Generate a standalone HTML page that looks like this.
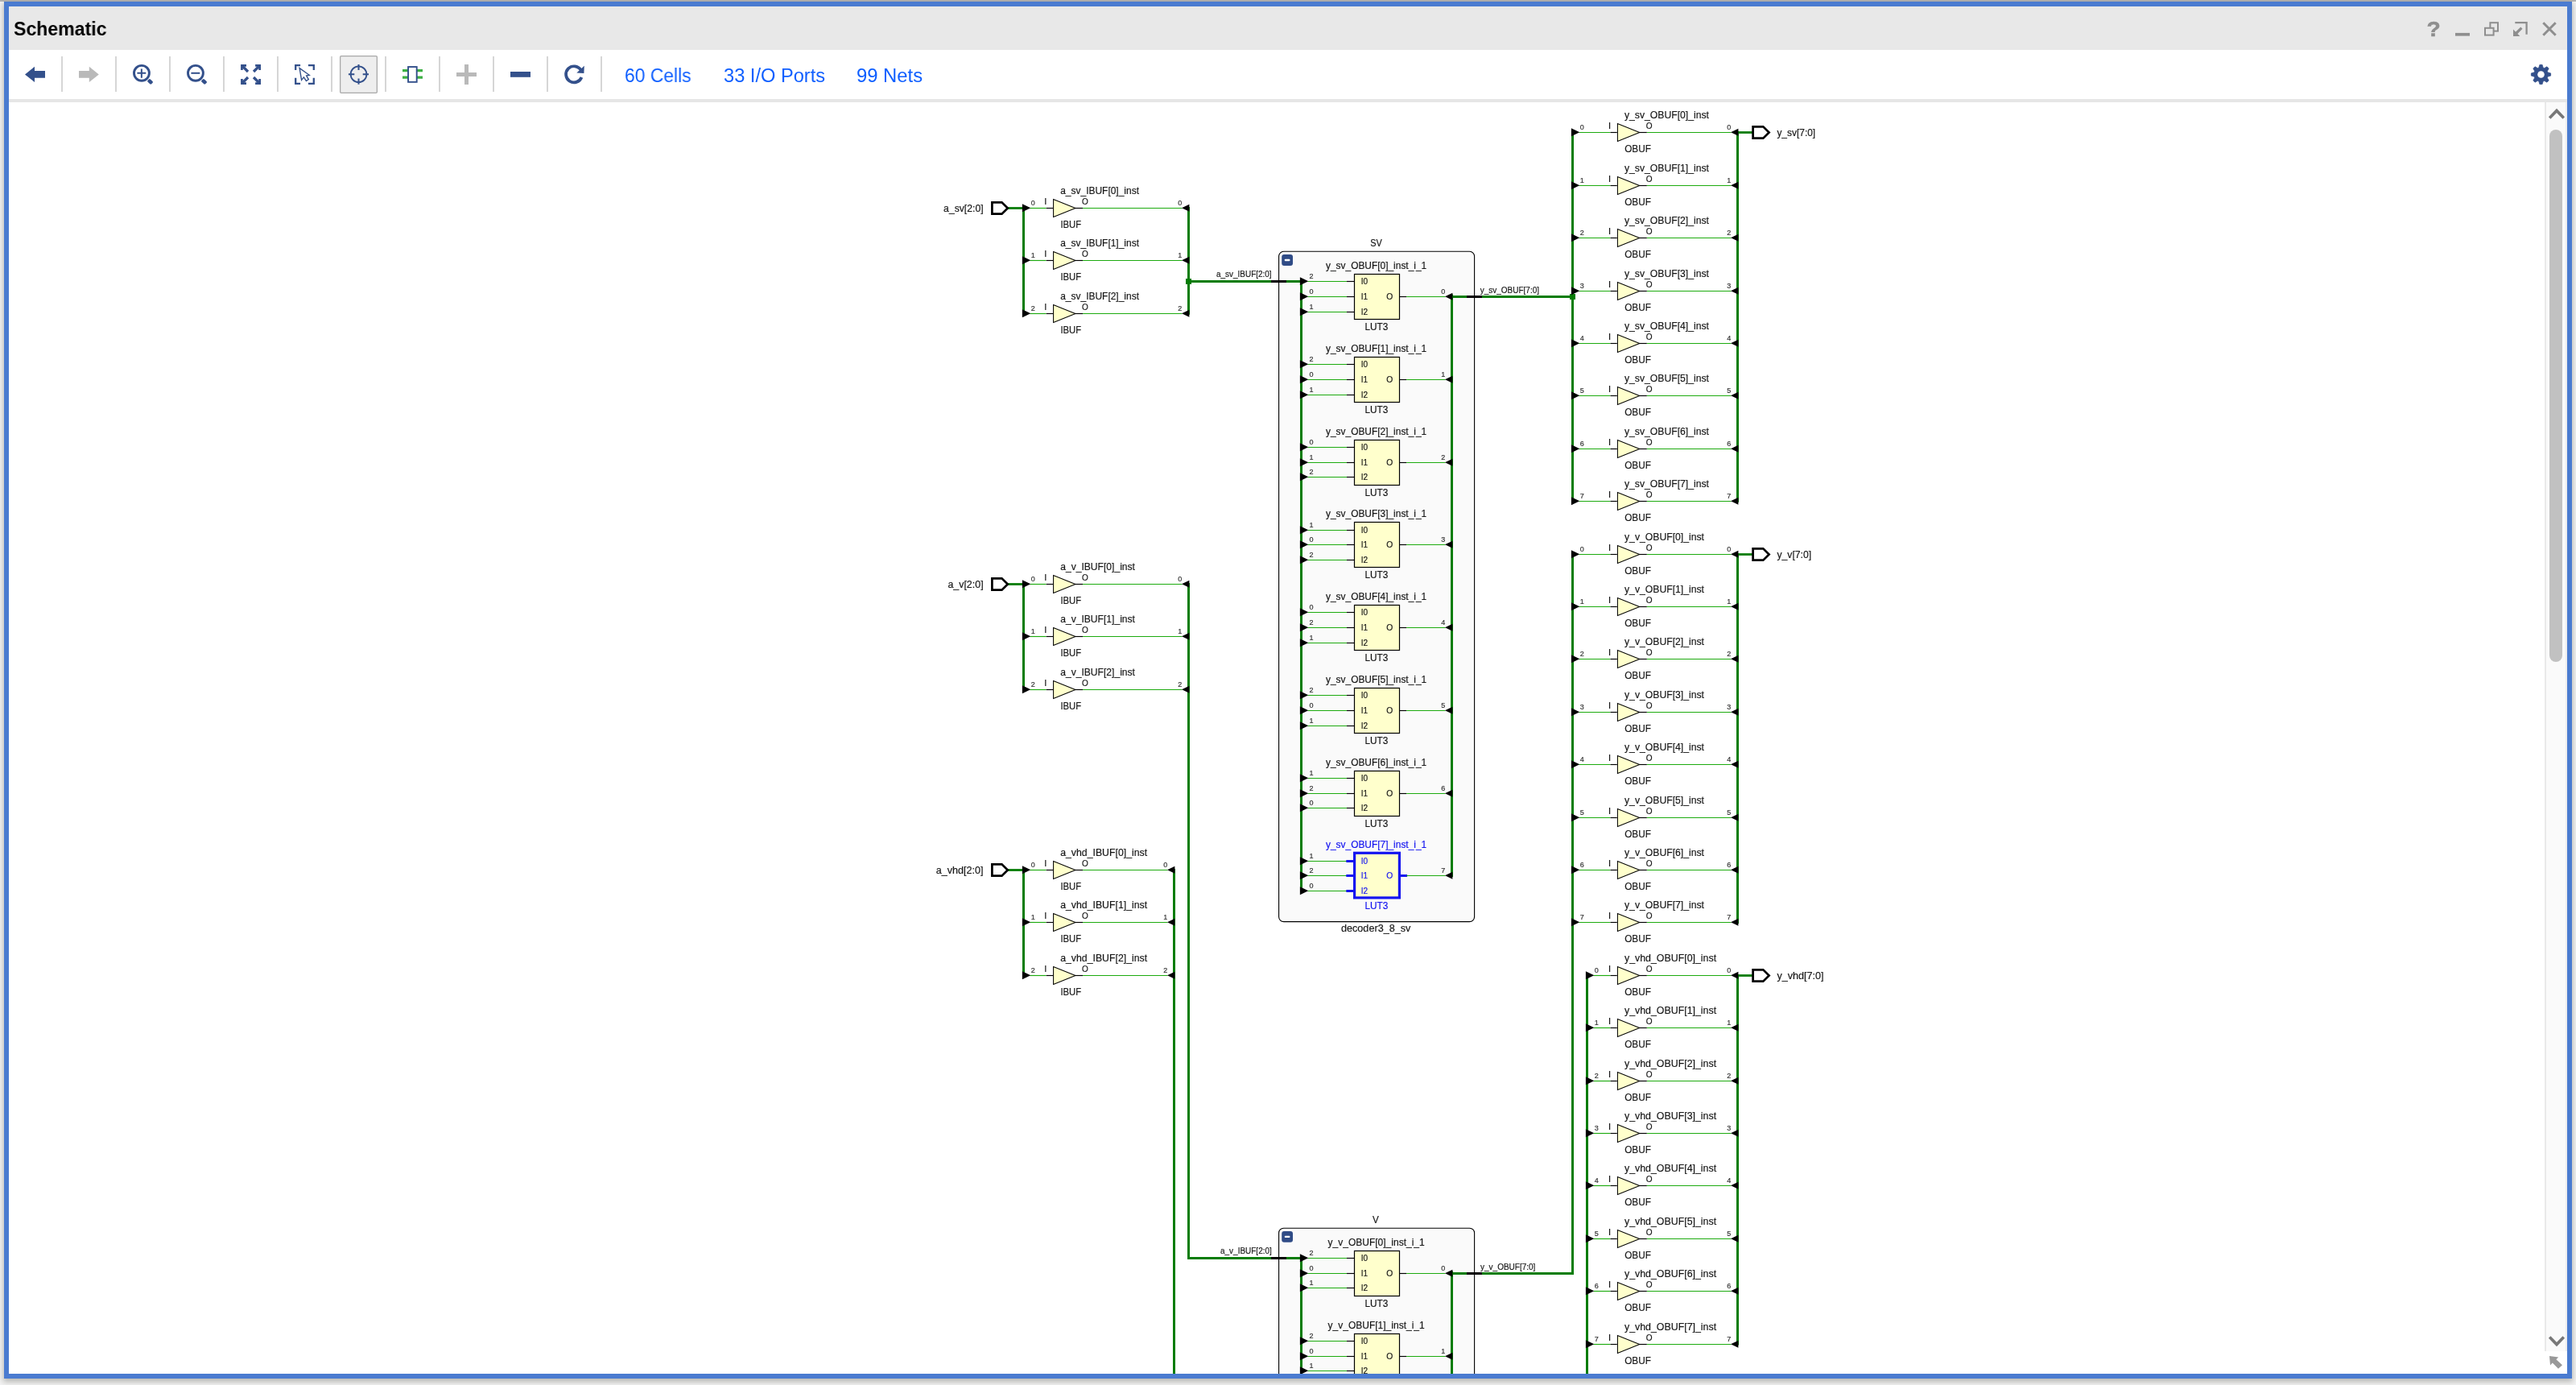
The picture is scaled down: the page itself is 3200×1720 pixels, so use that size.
<!DOCTYPE html>
<html>
<head>
<meta charset="utf-8">
<title>Schematic</title>
<style>
html,body{margin:0;padding:0;}
body{width:3200px;height:1720px;overflow:hidden;position:relative;background:#f3f3f3;font-family:"Liberation Sans",sans-serif;}
#topstrip{position:absolute;left:0;top:0;width:3200px;height:2px;background:#b4b4b4;}
#win{position:absolute;left:5px;top:2px;width:3178px;height:1698px;border:6px solid #4a7bd0;background:#fff;box-shadow:0 3px 7px 1px rgba(60,60,50,0.33);}
#titlebar{position:absolute;left:11px;top:8px;width:3178px;height:54px;background:#e8e8e8;}
#title{position:absolute;left:17px;top:22.2px;font-weight:bold;font-size:24.2px;line-height:28px;color:#000;white-space:nowrap;transform-origin:0 0;transform:scaleX(0.955);will-change:transform;}
#toolbar{position:absolute;left:11px;top:62px;width:3178px;height:61px;background:#fff;}
#tbline{position:absolute;left:11px;top:123px;width:3178px;height:3.5px;background:#e6e6e6;}
.sep{position:absolute;top:70px;width:1.7px;height:44px;background:#d6d6d6;}
.lnk{position:absolute;top:78.6px;will-change:transform;font-size:23px;line-height:30px;color:#0f5fff;white-space:nowrap;transform-origin:0 0;}
#selbtn{position:absolute;left:422.2px;top:69.1px;width:46.6px;height:46.7px;box-sizing:border-box;border-radius:2px;background:#eeeeee;box-shadow:inset 0 0 0 1.3px #a9a9a9;}
#sbtrack{position:absolute;left:3161px;top:126.5px;width:26px;height:1551.5px;background:#fafafa;border-left:2px solid #e9e9e9;}
#sbthumb{position:absolute;left:3167px;top:161px;width:16px;height:661px;border-radius:8px;background:#c1c1c1;}
#sbr{position:absolute;left:3187px;top:126.5px;width:2px;height:1551.5px;background:#eeeeee;}
</style>
</head>
<body>
<div id="topstrip"></div>
<div id="win"></div>
<div id="titlebar"></div>
<div id="toolbar"></div>
<div id="tbline"></div>
<div id="title">Schematic</div>
<div class="sep" style="left:76.2px"></div>
<div class="sep" style="left:143.2px"></div>
<div class="sep" style="left:210.2px"></div>
<div class="sep" style="left:277.2px"></div>
<div class="sep" style="left:344.2px"></div>
<div class="sep" style="left:411.2px"></div>
<div class="sep" style="left:478.2px"></div>
<div class="sep" style="left:545.2px"></div>
<div class="sep" style="left:612.2px"></div>
<div class="sep" style="left:679.2px"></div>
<div class="sep" style="left:746.2px"></div>
<div id="selbtn"></div>
<div class="lnk" id="l1" style="left:775.6px;transform:scaleX(0.994)">60 Cells</div>
<div class="lnk" id="l2" style="left:898.6px;transform:scaleX(1.027)">33 I/O Ports</div>
<div class="lnk" id="l3" style="left:1064.4px;transform:scaleX(1.036)">99 Nets</div>
<div id="sbtrack"></div><div id="sbr"></div>
<div id="sbthumb"></div>
<svg id="sch" width="3200" height="1720" viewBox="0 0 3200 1720" font-family="Liberation Sans, sans-serif" style="position:absolute;left:0;top:0;will-change:transform">
<defs><clipPath id="cv"><rect x="11" y="127" width="3150" height="1579"/></clipPath></defs>
<g clip-path="url(#cv)">
<rect x="1588.6" y="312.3" width="243" height="832.3" rx="6" ry="6" fill="#fafafa" stroke="#000" stroke-width="1.1"/>
<rect x="1588.6" y="1525.2" width="243" height="274.8" rx="6" ry="6" fill="#fafafa" stroke="#000" stroke-width="1.1"/>
<path d="M1279.5 258.5L1299.7 258.5" stroke="#1dab0f" stroke-width="1.15" fill="none"/>
<path d="M1345 258.5L1468.5 258.5" stroke="#1dab0f" stroke-width="1.15" fill="none"/>
<path d="M1279.5 323.5L1299.7 323.5" stroke="#1dab0f" stroke-width="1.15" fill="none"/>
<path d="M1345 323.5L1468.5 323.5" stroke="#1dab0f" stroke-width="1.15" fill="none"/>
<path d="M1279.5 389.5L1299.7 389.5" stroke="#1dab0f" stroke-width="1.15" fill="none"/>
<path d="M1345 389.5L1468.5 389.5" stroke="#1dab0f" stroke-width="1.15" fill="none"/>
<path d="M1271.5 258.5L1271.5 389.2" stroke="#057c05" stroke-width="3" stroke-linecap="square" fill="none"/>
<path d="M1251.7 258.5L1271.5 258.5" stroke="#057c05" stroke-width="2.8" fill="none"/>
<path d="M1279.5 725.5L1299.7 725.5" stroke="#1dab0f" stroke-width="1.15" fill="none"/>
<path d="M1345 725.5L1468.5 725.5" stroke="#1dab0f" stroke-width="1.15" fill="none"/>
<path d="M1279.5 790.5L1299.7 790.5" stroke="#1dab0f" stroke-width="1.15" fill="none"/>
<path d="M1345 790.5L1468.5 790.5" stroke="#1dab0f" stroke-width="1.15" fill="none"/>
<path d="M1279.5 856.5L1299.7 856.5" stroke="#1dab0f" stroke-width="1.15" fill="none"/>
<path d="M1345 856.5L1468.5 856.5" stroke="#1dab0f" stroke-width="1.15" fill="none"/>
<path d="M1271.5 725.4L1271.5 856.3" stroke="#057c05" stroke-width="3" stroke-linecap="square" fill="none"/>
<path d="M1251.7 725.5L1271.5 725.5" stroke="#057c05" stroke-width="2.8" fill="none"/>
<path d="M1279.5 1080.5L1299.7 1080.5" stroke="#1dab0f" stroke-width="1.15" fill="none"/>
<path d="M1345 1080.5L1450.5 1080.5" stroke="#1dab0f" stroke-width="1.15" fill="none"/>
<path d="M1279.5 1145.5L1299.7 1145.5" stroke="#1dab0f" stroke-width="1.15" fill="none"/>
<path d="M1345 1145.5L1450.5 1145.5" stroke="#1dab0f" stroke-width="1.15" fill="none"/>
<path d="M1279.5 1211.5L1299.7 1211.5" stroke="#1dab0f" stroke-width="1.15" fill="none"/>
<path d="M1345 1211.5L1450.5 1211.5" stroke="#1dab0f" stroke-width="1.15" fill="none"/>
<path d="M1271.5 1080.5L1271.5 1211.2" stroke="#057c05" stroke-width="3" stroke-linecap="square" fill="none"/>
<path d="M1251.7 1080.5L1271.5 1080.5" stroke="#057c05" stroke-width="2.8" fill="none"/>
<path d="M1476.5 258.5L1476.5 389.2" stroke="#057c05" stroke-width="3" stroke-linecap="square" fill="none"/>
<path d="M1476.5 725.4L1476.5 1562.5" stroke="#057c05" stroke-width="3" stroke-linecap="square" fill="none"/>
<path d="M1475 1562.5L1579 1562.5" stroke="#057c05" stroke-width="3" fill="none"/>
<path d="M1458.5 1080.5L1458.5 1720" stroke="#057c05" stroke-width="3" stroke-linecap="square" fill="none"/>
<path d="M1476.5 349.5L1579 349.5" stroke="#057c05" stroke-width="3" fill="none"/>
<path d="M1579 349.5L1598 349.5" stroke="#000" stroke-width="3" fill="none"/>
<path d="M1598 349.5L1617 349.5" stroke="#057c05" stroke-width="3" fill="none"/>
<path d="M1579 1562.5L1598 1562.5" stroke="#000" stroke-width="3" fill="none"/>
<path d="M1598 1562.5L1617 1562.5" stroke="#057c05" stroke-width="3" fill="none"/>
<path d="M1624.5 349.5L1673 349.5" stroke="#1dab0f" stroke-width="1.15" fill="none"/>
<path d="M1624.5 368.5L1673 368.5" stroke="#1dab0f" stroke-width="1.15" fill="none"/>
<path d="M1624.5 387.5L1673 387.5" stroke="#1dab0f" stroke-width="1.15" fill="none"/>
<path d="M1747.1 368.5L1795.5 368.5" stroke="#1dab0f" stroke-width="1.15" fill="none"/>
<path d="M1624.5 452.5L1673 452.5" stroke="#1dab0f" stroke-width="1.15" fill="none"/>
<path d="M1624.5 471.5L1673 471.5" stroke="#1dab0f" stroke-width="1.15" fill="none"/>
<path d="M1624.5 490.5L1673 490.5" stroke="#1dab0f" stroke-width="1.15" fill="none"/>
<path d="M1747.1 471.5L1795.5 471.5" stroke="#1dab0f" stroke-width="1.15" fill="none"/>
<path d="M1624.5 555.5L1673 555.5" stroke="#1dab0f" stroke-width="1.15" fill="none"/>
<path d="M1624.5 574.5L1673 574.5" stroke="#1dab0f" stroke-width="1.15" fill="none"/>
<path d="M1624.5 592.5L1673 592.5" stroke="#1dab0f" stroke-width="1.15" fill="none"/>
<path d="M1747.1 574.5L1795.5 574.5" stroke="#1dab0f" stroke-width="1.15" fill="none"/>
<path d="M1624.5 658.5L1673 658.5" stroke="#1dab0f" stroke-width="1.15" fill="none"/>
<path d="M1624.5 676.5L1673 676.5" stroke="#1dab0f" stroke-width="1.15" fill="none"/>
<path d="M1624.5 695.5L1673 695.5" stroke="#1dab0f" stroke-width="1.15" fill="none"/>
<path d="M1747.1 676.5L1795.5 676.5" stroke="#1dab0f" stroke-width="1.15" fill="none"/>
<path d="M1624.5 760.5L1673 760.5" stroke="#1dab0f" stroke-width="1.15" fill="none"/>
<path d="M1624.5 779.5L1673 779.5" stroke="#1dab0f" stroke-width="1.15" fill="none"/>
<path d="M1624.5 798.5L1673 798.5" stroke="#1dab0f" stroke-width="1.15" fill="none"/>
<path d="M1747.1 779.5L1795.5 779.5" stroke="#1dab0f" stroke-width="1.15" fill="none"/>
<path d="M1624.5 863.5L1673 863.5" stroke="#1dab0f" stroke-width="1.15" fill="none"/>
<path d="M1624.5 882.5L1673 882.5" stroke="#1dab0f" stroke-width="1.15" fill="none"/>
<path d="M1624.5 901.5L1673 901.5" stroke="#1dab0f" stroke-width="1.15" fill="none"/>
<path d="M1747.1 882.5L1795.5 882.5" stroke="#1dab0f" stroke-width="1.15" fill="none"/>
<path d="M1624.5 966.5L1673 966.5" stroke="#1dab0f" stroke-width="1.15" fill="none"/>
<path d="M1624.5 985.5L1673 985.5" stroke="#1dab0f" stroke-width="1.15" fill="none"/>
<path d="M1624.5 1003.5L1673 1003.5" stroke="#1dab0f" stroke-width="1.15" fill="none"/>
<path d="M1747.1 985.5L1795.5 985.5" stroke="#1dab0f" stroke-width="1.15" fill="none"/>
<path d="M1624.5 1069.5L1673 1069.5" stroke="#1dab0f" stroke-width="1.15" fill="none"/>
<path d="M1672.3 1069.5L1682.5 1069.5" stroke="#1414f0" stroke-width="3" fill="none"/>
<path d="M1624.5 1087.5L1673 1087.5" stroke="#1dab0f" stroke-width="1.15" fill="none"/>
<path d="M1672.3 1087.5L1682.5 1087.5" stroke="#1414f0" stroke-width="3" fill="none"/>
<path d="M1624.5 1106.5L1673 1106.5" stroke="#1dab0f" stroke-width="1.15" fill="none"/>
<path d="M1672.3 1106.5L1682.5 1106.5" stroke="#1414f0" stroke-width="3" fill="none"/>
<path d="M1738.5 1087.5L1748.1 1087.5" stroke="#1414f0" stroke-width="3" fill="none"/>
<path d="M1747.1 1087.5L1795.5 1087.5" stroke="#1dab0f" stroke-width="1.15" fill="none"/>
<path d="M1616.5 349.5L1616.5 1106.5" stroke="#057c05" stroke-width="3" stroke-linecap="square" fill="none"/>
<path d="M1803.5 367.1L1803.5 1087.5" stroke="#057c05" stroke-width="3" stroke-linecap="square" fill="none"/>
<path d="M1803.5 368.5L1822 368.5" stroke="#057c05" stroke-width="3" fill="none"/>
<path d="M1822 368.5L1841 368.5" stroke="#000" stroke-width="3" fill="none"/>
<path d="M1841 368.5L1953.5 368.5" stroke="#057c05" stroke-width="3" fill="none"/>
<path d="M1624.5 1562.5L1673 1562.5" stroke="#1dab0f" stroke-width="1.15" fill="none"/>
<path d="M1624.5 1581.5L1673 1581.5" stroke="#1dab0f" stroke-width="1.15" fill="none"/>
<path d="M1624.5 1599.5L1673 1599.5" stroke="#1dab0f" stroke-width="1.15" fill="none"/>
<path d="M1747.1 1581.5L1795.5 1581.5" stroke="#1dab0f" stroke-width="1.15" fill="none"/>
<path d="M1624.5 1665.5L1673 1665.5" stroke="#1dab0f" stroke-width="1.15" fill="none"/>
<path d="M1624.5 1684.5L1673 1684.5" stroke="#1dab0f" stroke-width="1.15" fill="none"/>
<path d="M1624.5 1702.5L1673 1702.5" stroke="#1dab0f" stroke-width="1.15" fill="none"/>
<path d="M1747.1 1684.5L1795.5 1684.5" stroke="#1dab0f" stroke-width="1.15" fill="none"/>
<path d="M1616.5 1562.5L1616.5 1720" stroke="#057c05" stroke-width="3" stroke-linecap="square" fill="none"/>
<path d="M1803.5 1580.1L1803.5 1720" stroke="#057c05" stroke-width="3" stroke-linecap="square" fill="none"/>
<path d="M1803.5 1581.5L1822 1581.5" stroke="#057c05" stroke-width="3" fill="none"/>
<path d="M1822 1581.5L1841 1581.5" stroke="#000" stroke-width="3" fill="none"/>
<path d="M1841 1581.5L1955 1581.5" stroke="#057c05" stroke-width="3" fill="none"/>
<path d="M1961.5 164.5L2000.5 164.5" stroke="#1dab0f" stroke-width="1.15" fill="none"/>
<path d="M2045.8 164.5L2150.5 164.5" stroke="#1dab0f" stroke-width="1.15" fill="none"/>
<path d="M1961.5 230.5L2000.5 230.5" stroke="#1dab0f" stroke-width="1.15" fill="none"/>
<path d="M2045.8 230.5L2150.5 230.5" stroke="#1dab0f" stroke-width="1.15" fill="none"/>
<path d="M1961.5 295.5L2000.5 295.5" stroke="#1dab0f" stroke-width="1.15" fill="none"/>
<path d="M2045.8 295.5L2150.5 295.5" stroke="#1dab0f" stroke-width="1.15" fill="none"/>
<path d="M1961.5 361.5L2000.5 361.5" stroke="#1dab0f" stroke-width="1.15" fill="none"/>
<path d="M2045.8 361.5L2150.5 361.5" stroke="#1dab0f" stroke-width="1.15" fill="none"/>
<path d="M1961.5 426.5L2000.5 426.5" stroke="#1dab0f" stroke-width="1.15" fill="none"/>
<path d="M2045.8 426.5L2150.5 426.5" stroke="#1dab0f" stroke-width="1.15" fill="none"/>
<path d="M1961.5 491.5L2000.5 491.5" stroke="#1dab0f" stroke-width="1.15" fill="none"/>
<path d="M2045.8 491.5L2150.5 491.5" stroke="#1dab0f" stroke-width="1.15" fill="none"/>
<path d="M1961.5 557.5L2000.5 557.5" stroke="#1dab0f" stroke-width="1.15" fill="none"/>
<path d="M2045.8 557.5L2150.5 557.5" stroke="#1dab0f" stroke-width="1.15" fill="none"/>
<path d="M1961.5 622.5L2000.5 622.5" stroke="#1dab0f" stroke-width="1.15" fill="none"/>
<path d="M2045.8 622.5L2150.5 622.5" stroke="#1dab0f" stroke-width="1.15" fill="none"/>
<path d="M2158.5 164.5L2178 164.5" stroke="#057c05" stroke-width="2.8" fill="none"/>
<path d="M1953.5 164.3L1953.5 622.3" stroke="#057c05" stroke-width="3" stroke-linecap="square" fill="none"/>
<path d="M2158.5 164.3L2158.5 622.3" stroke="#057c05" stroke-width="3" stroke-linecap="square" fill="none"/>
<path d="M1961.5 688.5L2000.5 688.5" stroke="#1dab0f" stroke-width="1.15" fill="none"/>
<path d="M2045.8 688.5L2150.5 688.5" stroke="#1dab0f" stroke-width="1.15" fill="none"/>
<path d="M1961.5 753.5L2000.5 753.5" stroke="#1dab0f" stroke-width="1.15" fill="none"/>
<path d="M2045.8 753.5L2150.5 753.5" stroke="#1dab0f" stroke-width="1.15" fill="none"/>
<path d="M1961.5 818.5L2000.5 818.5" stroke="#1dab0f" stroke-width="1.15" fill="none"/>
<path d="M2045.8 818.5L2150.5 818.5" stroke="#1dab0f" stroke-width="1.15" fill="none"/>
<path d="M1961.5 884.5L2000.5 884.5" stroke="#1dab0f" stroke-width="1.15" fill="none"/>
<path d="M2045.8 884.5L2150.5 884.5" stroke="#1dab0f" stroke-width="1.15" fill="none"/>
<path d="M1961.5 949.5L2000.5 949.5" stroke="#1dab0f" stroke-width="1.15" fill="none"/>
<path d="M2045.8 949.5L2150.5 949.5" stroke="#1dab0f" stroke-width="1.15" fill="none"/>
<path d="M1961.5 1015.5L2000.5 1015.5" stroke="#1dab0f" stroke-width="1.15" fill="none"/>
<path d="M2045.8 1015.5L2150.5 1015.5" stroke="#1dab0f" stroke-width="1.15" fill="none"/>
<path d="M1961.5 1080.5L2000.5 1080.5" stroke="#1dab0f" stroke-width="1.15" fill="none"/>
<path d="M2045.8 1080.5L2150.5 1080.5" stroke="#1dab0f" stroke-width="1.15" fill="none"/>
<path d="M1961.5 1145.5L2000.5 1145.5" stroke="#1dab0f" stroke-width="1.15" fill="none"/>
<path d="M2045.8 1145.5L2150.5 1145.5" stroke="#1dab0f" stroke-width="1.15" fill="none"/>
<path d="M2158.5 688.5L2178 688.5" stroke="#057c05" stroke-width="2.8" fill="none"/>
<path d="M1953.5 688.4L1953.5 1581.5" stroke="#057c05" stroke-width="3" stroke-linecap="square" fill="none"/>
<path d="M2158.5 688.4L2158.5 1145.4" stroke="#057c05" stroke-width="3" stroke-linecap="square" fill="none"/>
<path d="M1979.5 1211.5L2000.5 1211.5" stroke="#1dab0f" stroke-width="1.15" fill="none"/>
<path d="M2045.8 1211.5L2150.5 1211.5" stroke="#1dab0f" stroke-width="1.15" fill="none"/>
<path d="M1979.5 1276.5L2000.5 1276.5" stroke="#1dab0f" stroke-width="1.15" fill="none"/>
<path d="M2045.8 1276.5L2150.5 1276.5" stroke="#1dab0f" stroke-width="1.15" fill="none"/>
<path d="M1979.5 1342.5L2000.5 1342.5" stroke="#1dab0f" stroke-width="1.15" fill="none"/>
<path d="M2045.8 1342.5L2150.5 1342.5" stroke="#1dab0f" stroke-width="1.15" fill="none"/>
<path d="M1979.5 1407.5L2000.5 1407.5" stroke="#1dab0f" stroke-width="1.15" fill="none"/>
<path d="M2045.8 1407.5L2150.5 1407.5" stroke="#1dab0f" stroke-width="1.15" fill="none"/>
<path d="M1979.5 1472.5L2000.5 1472.5" stroke="#1dab0f" stroke-width="1.15" fill="none"/>
<path d="M2045.8 1472.5L2150.5 1472.5" stroke="#1dab0f" stroke-width="1.15" fill="none"/>
<path d="M1979.5 1538.5L2000.5 1538.5" stroke="#1dab0f" stroke-width="1.15" fill="none"/>
<path d="M2045.8 1538.5L2150.5 1538.5" stroke="#1dab0f" stroke-width="1.15" fill="none"/>
<path d="M1979.5 1603.5L2000.5 1603.5" stroke="#1dab0f" stroke-width="1.15" fill="none"/>
<path d="M2045.8 1603.5L2150.5 1603.5" stroke="#1dab0f" stroke-width="1.15" fill="none"/>
<path d="M1979.5 1669.5L2000.5 1669.5" stroke="#1dab0f" stroke-width="1.15" fill="none"/>
<path d="M2045.8 1669.5L2150.5 1669.5" stroke="#1dab0f" stroke-width="1.15" fill="none"/>
<path d="M2158.5 1211.5L2178 1211.5" stroke="#057c05" stroke-width="2.8" fill="none"/>
<path d="M1971.5 1211.4L1971.5 1720" stroke="#057c05" stroke-width="3" stroke-linecap="square" fill="none"/>
<path d="M2158.5 1211.4L2158.5 1669.1" stroke="#057c05" stroke-width="3" stroke-linecap="square" fill="none"/>
<polygon points="1269.9,253.2 1269.9,263.2 1280.3,258.2" fill="#000"/>
<path d="M1299.7 258.5L1308 258.5" stroke="#000" stroke-width="1.15" fill="none"/>
<path d="M1335 258.5L1345 258.5" stroke="#000" stroke-width="1.15" fill="none"/>
<polygon points="1477.4,253.8 1477.4,262.8 1468,258.3" fill="#000"/>
<polygon points="1308.6,247.6 1308.6,269.4 1335.9,258.5" fill="#ffffcc" stroke="#000" stroke-width="1.05" stroke-linejoin="miter"/>
<polygon points="1269.9,318.2 1269.9,328.2 1280.3,323.2" fill="#000"/>
<path d="M1299.7 323.5L1308 323.5" stroke="#000" stroke-width="1.15" fill="none"/>
<path d="M1335 323.5L1345 323.5" stroke="#000" stroke-width="1.15" fill="none"/>
<polygon points="1477.4,318.8 1477.4,327.8 1468,323.3" fill="#000"/>
<polygon points="1308.6,312.6 1308.6,334.4 1335.9,323.5" fill="#ffffcc" stroke="#000" stroke-width="1.05" stroke-linejoin="miter"/>
<polygon points="1269.9,384.2 1269.9,394.2 1280.3,389.2" fill="#000"/>
<path d="M1299.7 389.5L1308 389.5" stroke="#000" stroke-width="1.15" fill="none"/>
<path d="M1335 389.5L1345 389.5" stroke="#000" stroke-width="1.15" fill="none"/>
<polygon points="1477.4,384.8 1477.4,393.8 1468,389.3" fill="#000"/>
<polygon points="1308.6,378.6 1308.6,400.4 1335.9,389.5" fill="#ffffcc" stroke="#000" stroke-width="1.05" stroke-linejoin="miter"/>
<polygon points="1232.4,251.3 1244.5,251.3 1251.8,258.5 1244.5,265.7 1232.4,265.7" fill="#fff" stroke="#000" stroke-width="2.7" stroke-linejoin="miter"/>
<polygon points="1269.9,720.2 1269.9,730.2 1280.3,725.2" fill="#000"/>
<path d="M1299.7 725.5L1308 725.5" stroke="#000" stroke-width="1.15" fill="none"/>
<path d="M1335 725.5L1345 725.5" stroke="#000" stroke-width="1.15" fill="none"/>
<polygon points="1477.4,720.8 1477.4,729.8 1468,725.3" fill="#000"/>
<polygon points="1308.6,714.6 1308.6,736.4 1335.9,725.5" fill="#ffffcc" stroke="#000" stroke-width="1.05" stroke-linejoin="miter"/>
<polygon points="1269.9,785.2 1269.9,795.2 1280.3,790.2" fill="#000"/>
<path d="M1299.7 790.5L1308 790.5" stroke="#000" stroke-width="1.15" fill="none"/>
<path d="M1335 790.5L1345 790.5" stroke="#000" stroke-width="1.15" fill="none"/>
<polygon points="1477.4,785.8 1477.4,794.8 1468,790.3" fill="#000"/>
<polygon points="1308.6,779.6 1308.6,801.4 1335.9,790.5" fill="#ffffcc" stroke="#000" stroke-width="1.05" stroke-linejoin="miter"/>
<polygon points="1269.9,851.2 1269.9,861.2 1280.3,856.2" fill="#000"/>
<path d="M1299.7 856.5L1308 856.5" stroke="#000" stroke-width="1.15" fill="none"/>
<path d="M1335 856.5L1345 856.5" stroke="#000" stroke-width="1.15" fill="none"/>
<polygon points="1477.4,851.8 1477.4,860.8 1468,856.3" fill="#000"/>
<polygon points="1308.6,845.6 1308.6,867.4 1335.9,856.5" fill="#ffffcc" stroke="#000" stroke-width="1.05" stroke-linejoin="miter"/>
<polygon points="1232.4,718.3 1244.5,718.3 1251.8,725.5 1244.5,732.7 1232.4,732.7" fill="#fff" stroke="#000" stroke-width="2.7" stroke-linejoin="miter"/>
<polygon points="1269.9,1075.2 1269.9,1085.2 1280.3,1080.2" fill="#000"/>
<path d="M1299.7 1080.5L1308 1080.5" stroke="#000" stroke-width="1.15" fill="none"/>
<path d="M1335 1080.5L1345 1080.5" stroke="#000" stroke-width="1.15" fill="none"/>
<polygon points="1459.4,1075.8 1459.4,1084.8 1450,1080.3" fill="#000"/>
<polygon points="1308.6,1069.6 1308.6,1091.4 1335.9,1080.5" fill="#ffffcc" stroke="#000" stroke-width="1.05" stroke-linejoin="miter"/>
<polygon points="1269.9,1140.2 1269.9,1150.2 1280.3,1145.2" fill="#000"/>
<path d="M1299.7 1145.5L1308 1145.5" stroke="#000" stroke-width="1.15" fill="none"/>
<path d="M1335 1145.5L1345 1145.5" stroke="#000" stroke-width="1.15" fill="none"/>
<polygon points="1459.4,1140.8 1459.4,1149.8 1450,1145.3" fill="#000"/>
<polygon points="1308.6,1134.6 1308.6,1156.4 1335.9,1145.5" fill="#ffffcc" stroke="#000" stroke-width="1.05" stroke-linejoin="miter"/>
<polygon points="1269.9,1206.2 1269.9,1216.2 1280.3,1211.2" fill="#000"/>
<path d="M1299.7 1211.5L1308 1211.5" stroke="#000" stroke-width="1.15" fill="none"/>
<path d="M1335 1211.5L1345 1211.5" stroke="#000" stroke-width="1.15" fill="none"/>
<polygon points="1459.4,1206.8 1459.4,1215.8 1450,1211.3" fill="#000"/>
<polygon points="1308.6,1200.6 1308.6,1222.4 1335.9,1211.5" fill="#ffffcc" stroke="#000" stroke-width="1.05" stroke-linejoin="miter"/>
<polygon points="1232.4,1073.3 1244.5,1073.3 1251.8,1080.5 1244.5,1087.7 1232.4,1087.7" fill="#fff" stroke="#000" stroke-width="2.7" stroke-linejoin="miter"/>
<rect x="1473" y="346" width="7" height="7" fill="#057c05"/>
<rect x="1592.2" y="316.1" width="13.8" height="13.8" rx="3" fill="#2f4b86"/>
<rect x="1595.8" y="321.8" width="6.6" height="2.4" rx="0.8" fill="#fff"/>
<rect x="1592.2" y="1529" width="13.8" height="13.8" rx="3" fill="#2f4b86"/>
<rect x="1595.8" y="1534.7" width="6.6" height="2.4" rx="0.8" fill="#fff"/>
<polygon points="1614.9,344.2 1614.9,354.2 1625.3,349.2" fill="#000"/>
<path d="M1673 349.5L1682.5 349.5" stroke="#000" stroke-width="1.15" fill="none"/>
<polygon points="1614.9,363.2 1614.9,373.2 1625.3,368.2" fill="#000"/>
<path d="M1673 368.5L1682.5 368.5" stroke="#000" stroke-width="1.15" fill="none"/>
<polygon points="1614.9,382.2 1614.9,392.2 1625.3,387.2" fill="#000"/>
<path d="M1673 387.5L1682.5 387.5" stroke="#000" stroke-width="1.15" fill="none"/>
<path d="M1738.5 368.5L1747.1 368.5" stroke="#000" stroke-width="1.15" fill="none"/>
<polygon points="1804.4,363.8 1804.4,372.8 1795,368.3" fill="#000"/>
<rect x="1682.5" y="340.5" width="56" height="56" fill="#ffffcc" stroke="#000" stroke-width="1.2"/>
<polygon points="1614.9,447.2 1614.9,457.2 1625.3,452.2" fill="#000"/>
<path d="M1673 452.5L1682.5 452.5" stroke="#000" stroke-width="1.15" fill="none"/>
<polygon points="1614.9,466.2 1614.9,476.2 1625.3,471.2" fill="#000"/>
<path d="M1673 471.5L1682.5 471.5" stroke="#000" stroke-width="1.15" fill="none"/>
<polygon points="1614.9,485.2 1614.9,495.2 1625.3,490.2" fill="#000"/>
<path d="M1673 490.5L1682.5 490.5" stroke="#000" stroke-width="1.15" fill="none"/>
<path d="M1738.5 471.5L1747.1 471.5" stroke="#000" stroke-width="1.15" fill="none"/>
<polygon points="1804.4,466.8 1804.4,475.8 1795,471.3" fill="#000"/>
<rect x="1682.5" y="443.5" width="56" height="56" fill="#ffffcc" stroke="#000" stroke-width="1.2"/>
<polygon points="1614.9,550.2 1614.9,560.2 1625.3,555.2" fill="#000"/>
<path d="M1673 555.5L1682.5 555.5" stroke="#000" stroke-width="1.15" fill="none"/>
<polygon points="1614.9,569.2 1614.9,579.2 1625.3,574.2" fill="#000"/>
<path d="M1673 574.5L1682.5 574.5" stroke="#000" stroke-width="1.15" fill="none"/>
<polygon points="1614.9,587.2 1614.9,597.2 1625.3,592.2" fill="#000"/>
<path d="M1673 592.5L1682.5 592.5" stroke="#000" stroke-width="1.15" fill="none"/>
<path d="M1738.5 574.5L1747.1 574.5" stroke="#000" stroke-width="1.15" fill="none"/>
<polygon points="1804.4,569.8 1804.4,578.8 1795,574.3" fill="#000"/>
<rect x="1682.5" y="546.5" width="56" height="56" fill="#ffffcc" stroke="#000" stroke-width="1.2"/>
<polygon points="1614.9,653.2 1614.9,663.2 1625.3,658.2" fill="#000"/>
<path d="M1673 658.5L1682.5 658.5" stroke="#000" stroke-width="1.15" fill="none"/>
<polygon points="1614.9,671.2 1614.9,681.2 1625.3,676.2" fill="#000"/>
<path d="M1673 676.5L1682.5 676.5" stroke="#000" stroke-width="1.15" fill="none"/>
<polygon points="1614.9,690.2 1614.9,700.2 1625.3,695.2" fill="#000"/>
<path d="M1673 695.5L1682.5 695.5" stroke="#000" stroke-width="1.15" fill="none"/>
<path d="M1738.5 676.5L1747.1 676.5" stroke="#000" stroke-width="1.15" fill="none"/>
<polygon points="1804.4,671.8 1804.4,680.8 1795,676.3" fill="#000"/>
<rect x="1682.5" y="648.5" width="56" height="56" fill="#ffffcc" stroke="#000" stroke-width="1.2"/>
<polygon points="1614.9,755.2 1614.9,765.2 1625.3,760.2" fill="#000"/>
<path d="M1673 760.5L1682.5 760.5" stroke="#000" stroke-width="1.15" fill="none"/>
<polygon points="1614.9,774.2 1614.9,784.2 1625.3,779.2" fill="#000"/>
<path d="M1673 779.5L1682.5 779.5" stroke="#000" stroke-width="1.15" fill="none"/>
<polygon points="1614.9,793.2 1614.9,803.2 1625.3,798.2" fill="#000"/>
<path d="M1673 798.5L1682.5 798.5" stroke="#000" stroke-width="1.15" fill="none"/>
<path d="M1738.5 779.5L1747.1 779.5" stroke="#000" stroke-width="1.15" fill="none"/>
<polygon points="1804.4,774.8 1804.4,783.8 1795,779.3" fill="#000"/>
<rect x="1682.5" y="751.5" width="56" height="56" fill="#ffffcc" stroke="#000" stroke-width="1.2"/>
<polygon points="1614.9,858.2 1614.9,868.2 1625.3,863.2" fill="#000"/>
<path d="M1673 863.5L1682.5 863.5" stroke="#000" stroke-width="1.15" fill="none"/>
<polygon points="1614.9,877.2 1614.9,887.2 1625.3,882.2" fill="#000"/>
<path d="M1673 882.5L1682.5 882.5" stroke="#000" stroke-width="1.15" fill="none"/>
<polygon points="1614.9,896.2 1614.9,906.2 1625.3,901.2" fill="#000"/>
<path d="M1673 901.5L1682.5 901.5" stroke="#000" stroke-width="1.15" fill="none"/>
<path d="M1738.5 882.5L1747.1 882.5" stroke="#000" stroke-width="1.15" fill="none"/>
<polygon points="1804.4,877.8 1804.4,886.8 1795,882.3" fill="#000"/>
<rect x="1682.5" y="854.5" width="56" height="56" fill="#ffffcc" stroke="#000" stroke-width="1.2"/>
<polygon points="1614.9,961.2 1614.9,971.2 1625.3,966.2" fill="#000"/>
<path d="M1673 966.5L1682.5 966.5" stroke="#000" stroke-width="1.15" fill="none"/>
<polygon points="1614.9,980.2 1614.9,990.2 1625.3,985.2" fill="#000"/>
<path d="M1673 985.5L1682.5 985.5" stroke="#000" stroke-width="1.15" fill="none"/>
<polygon points="1614.9,998.2 1614.9,1008.2 1625.3,1003.2" fill="#000"/>
<path d="M1673 1003.5L1682.5 1003.5" stroke="#000" stroke-width="1.15" fill="none"/>
<path d="M1738.5 985.5L1747.1 985.5" stroke="#000" stroke-width="1.15" fill="none"/>
<polygon points="1804.4,980.8 1804.4,989.8 1795,985.3" fill="#000"/>
<rect x="1682.5" y="957.5" width="56" height="56" fill="#ffffcc" stroke="#000" stroke-width="1.2"/>
<polygon points="1614.9,1064.2 1614.9,1074.2 1625.3,1069.2" fill="#000"/>
<polygon points="1614.9,1082.2 1614.9,1092.2 1625.3,1087.2" fill="#000"/>
<polygon points="1614.9,1101.2 1614.9,1111.2 1625.3,1106.2" fill="#000"/>
<polygon points="1804.4,1082.8 1804.4,1091.8 1795,1087.3" fill="#000"/>
<rect x="1682.6" y="1059.3" width="55.8" height="55.6" fill="#ffffcc" stroke="#1414f0" stroke-width="3.2"/>
<rect x="1950" y="365" width="7" height="7" fill="#057c05"/>
<polygon points="1614.9,1557.2 1614.9,1567.2 1625.3,1562.2" fill="#000"/>
<path d="M1673 1562.5L1682.5 1562.5" stroke="#000" stroke-width="1.15" fill="none"/>
<polygon points="1614.9,1576.2 1614.9,1586.2 1625.3,1581.2" fill="#000"/>
<path d="M1673 1581.5L1682.5 1581.5" stroke="#000" stroke-width="1.15" fill="none"/>
<polygon points="1614.9,1594.2 1614.9,1604.2 1625.3,1599.2" fill="#000"/>
<path d="M1673 1599.5L1682.5 1599.5" stroke="#000" stroke-width="1.15" fill="none"/>
<path d="M1738.5 1581.5L1747.1 1581.5" stroke="#000" stroke-width="1.15" fill="none"/>
<polygon points="1804.4,1576.8 1804.4,1585.8 1795,1581.3" fill="#000"/>
<rect x="1682.5" y="1553.5" width="56" height="56" fill="#ffffcc" stroke="#000" stroke-width="1.2"/>
<polygon points="1614.9,1660.2 1614.9,1670.2 1625.3,1665.2" fill="#000"/>
<path d="M1673 1665.5L1682.5 1665.5" stroke="#000" stroke-width="1.15" fill="none"/>
<polygon points="1614.9,1679.2 1614.9,1689.2 1625.3,1684.2" fill="#000"/>
<path d="M1673 1684.5L1682.5 1684.5" stroke="#000" stroke-width="1.15" fill="none"/>
<polygon points="1614.9,1697.2 1614.9,1707.2 1625.3,1702.2" fill="#000"/>
<path d="M1673 1702.5L1682.5 1702.5" stroke="#000" stroke-width="1.15" fill="none"/>
<path d="M1738.5 1684.5L1747.1 1684.5" stroke="#000" stroke-width="1.15" fill="none"/>
<polygon points="1804.4,1679.8 1804.4,1688.8 1795,1684.3" fill="#000"/>
<rect x="1682.5" y="1656.5" width="56" height="56" fill="#ffffcc" stroke="#000" stroke-width="1.2"/>
<polygon points="1951.9,159.2 1951.9,169.2 1962.3,164.2" fill="#000"/>
<path d="M2000.5 164.5L2008.8 164.5" stroke="#000" stroke-width="1.15" fill="none"/>
<path d="M2035.8 164.5L2045.8 164.5" stroke="#000" stroke-width="1.15" fill="none"/>
<polygon points="2159.4,159.8 2159.4,168.8 2150,164.3" fill="#000"/>
<polygon points="2009.4,153.6 2009.4,175.4 2036.7,164.5" fill="#ffffcc" stroke="#000" stroke-width="1.05" stroke-linejoin="miter"/>
<polygon points="1951.9,225.2 1951.9,235.2 1962.3,230.2" fill="#000"/>
<path d="M2000.5 230.5L2008.8 230.5" stroke="#000" stroke-width="1.15" fill="none"/>
<path d="M2035.8 230.5L2045.8 230.5" stroke="#000" stroke-width="1.15" fill="none"/>
<polygon points="2159.4,225.8 2159.4,234.8 2150,230.3" fill="#000"/>
<polygon points="2009.4,219.6 2009.4,241.4 2036.7,230.5" fill="#ffffcc" stroke="#000" stroke-width="1.05" stroke-linejoin="miter"/>
<polygon points="1951.9,290.2 1951.9,300.2 1962.3,295.2" fill="#000"/>
<path d="M2000.5 295.5L2008.8 295.5" stroke="#000" stroke-width="1.15" fill="none"/>
<path d="M2035.8 295.5L2045.8 295.5" stroke="#000" stroke-width="1.15" fill="none"/>
<polygon points="2159.4,290.8 2159.4,299.8 2150,295.3" fill="#000"/>
<polygon points="2009.4,284.6 2009.4,306.4 2036.7,295.5" fill="#ffffcc" stroke="#000" stroke-width="1.05" stroke-linejoin="miter"/>
<polygon points="1951.9,356.2 1951.9,366.2 1962.3,361.2" fill="#000"/>
<path d="M2000.5 361.5L2008.8 361.5" stroke="#000" stroke-width="1.15" fill="none"/>
<path d="M2035.8 361.5L2045.8 361.5" stroke="#000" stroke-width="1.15" fill="none"/>
<polygon points="2159.4,356.8 2159.4,365.8 2150,361.3" fill="#000"/>
<polygon points="2009.4,350.6 2009.4,372.4 2036.7,361.5" fill="#ffffcc" stroke="#000" stroke-width="1.05" stroke-linejoin="miter"/>
<polygon points="1951.9,421.2 1951.9,431.2 1962.3,426.2" fill="#000"/>
<path d="M2000.5 426.5L2008.8 426.5" stroke="#000" stroke-width="1.15" fill="none"/>
<path d="M2035.8 426.5L2045.8 426.5" stroke="#000" stroke-width="1.15" fill="none"/>
<polygon points="2159.4,421.8 2159.4,430.8 2150,426.3" fill="#000"/>
<polygon points="2009.4,415.6 2009.4,437.4 2036.7,426.5" fill="#ffffcc" stroke="#000" stroke-width="1.05" stroke-linejoin="miter"/>
<polygon points="1951.9,486.2 1951.9,496.2 1962.3,491.2" fill="#000"/>
<path d="M2000.5 491.5L2008.8 491.5" stroke="#000" stroke-width="1.15" fill="none"/>
<path d="M2035.8 491.5L2045.8 491.5" stroke="#000" stroke-width="1.15" fill="none"/>
<polygon points="2159.4,486.8 2159.4,495.8 2150,491.3" fill="#000"/>
<polygon points="2009.4,480.6 2009.4,502.4 2036.7,491.5" fill="#ffffcc" stroke="#000" stroke-width="1.05" stroke-linejoin="miter"/>
<polygon points="1951.9,552.2 1951.9,562.2 1962.3,557.2" fill="#000"/>
<path d="M2000.5 557.5L2008.8 557.5" stroke="#000" stroke-width="1.15" fill="none"/>
<path d="M2035.8 557.5L2045.8 557.5" stroke="#000" stroke-width="1.15" fill="none"/>
<polygon points="2159.4,552.8 2159.4,561.8 2150,557.3" fill="#000"/>
<polygon points="2009.4,546.6 2009.4,568.4 2036.7,557.5" fill="#ffffcc" stroke="#000" stroke-width="1.05" stroke-linejoin="miter"/>
<polygon points="1951.9,617.2 1951.9,627.2 1962.3,622.2" fill="#000"/>
<path d="M2000.5 622.5L2008.8 622.5" stroke="#000" stroke-width="1.15" fill="none"/>
<path d="M2035.8 622.5L2045.8 622.5" stroke="#000" stroke-width="1.15" fill="none"/>
<polygon points="2159.4,617.8 2159.4,626.8 2150,622.3" fill="#000"/>
<polygon points="2009.4,611.6 2009.4,633.4 2036.7,622.5" fill="#ffffcc" stroke="#000" stroke-width="1.05" stroke-linejoin="miter"/>
<polygon points="2177.6,157.3 2190.3,157.3 2197.6,164.5 2190.3,171.7 2177.6,171.7" fill="#fff" stroke="#000" stroke-width="2.7" stroke-linejoin="miter"/>
<polygon points="1951.9,683.2 1951.9,693.2 1962.3,688.2" fill="#000"/>
<path d="M2000.5 688.5L2008.8 688.5" stroke="#000" stroke-width="1.15" fill="none"/>
<path d="M2035.8 688.5L2045.8 688.5" stroke="#000" stroke-width="1.15" fill="none"/>
<polygon points="2159.4,683.8 2159.4,692.8 2150,688.3" fill="#000"/>
<polygon points="2009.4,677.6 2009.4,699.4 2036.7,688.5" fill="#ffffcc" stroke="#000" stroke-width="1.05" stroke-linejoin="miter"/>
<polygon points="1951.9,748.2 1951.9,758.2 1962.3,753.2" fill="#000"/>
<path d="M2000.5 753.5L2008.8 753.5" stroke="#000" stroke-width="1.15" fill="none"/>
<path d="M2035.8 753.5L2045.8 753.5" stroke="#000" stroke-width="1.15" fill="none"/>
<polygon points="2159.4,748.8 2159.4,757.8 2150,753.3" fill="#000"/>
<polygon points="2009.4,742.6 2009.4,764.4 2036.7,753.5" fill="#ffffcc" stroke="#000" stroke-width="1.05" stroke-linejoin="miter"/>
<polygon points="1951.9,813.2 1951.9,823.2 1962.3,818.2" fill="#000"/>
<path d="M2000.5 818.5L2008.8 818.5" stroke="#000" stroke-width="1.15" fill="none"/>
<path d="M2035.8 818.5L2045.8 818.5" stroke="#000" stroke-width="1.15" fill="none"/>
<polygon points="2159.4,813.8 2159.4,822.8 2150,818.3" fill="#000"/>
<polygon points="2009.4,807.6 2009.4,829.4 2036.7,818.5" fill="#ffffcc" stroke="#000" stroke-width="1.05" stroke-linejoin="miter"/>
<polygon points="1951.9,879.2 1951.9,889.2 1962.3,884.2" fill="#000"/>
<path d="M2000.5 884.5L2008.8 884.5" stroke="#000" stroke-width="1.15" fill="none"/>
<path d="M2035.8 884.5L2045.8 884.5" stroke="#000" stroke-width="1.15" fill="none"/>
<polygon points="2159.4,879.8 2159.4,888.8 2150,884.3" fill="#000"/>
<polygon points="2009.4,873.6 2009.4,895.4 2036.7,884.5" fill="#ffffcc" stroke="#000" stroke-width="1.05" stroke-linejoin="miter"/>
<polygon points="1951.9,944.2 1951.9,954.2 1962.3,949.2" fill="#000"/>
<path d="M2000.5 949.5L2008.8 949.5" stroke="#000" stroke-width="1.15" fill="none"/>
<path d="M2035.8 949.5L2045.8 949.5" stroke="#000" stroke-width="1.15" fill="none"/>
<polygon points="2159.4,944.8 2159.4,953.8 2150,949.3" fill="#000"/>
<polygon points="2009.4,938.6 2009.4,960.4 2036.7,949.5" fill="#ffffcc" stroke="#000" stroke-width="1.05" stroke-linejoin="miter"/>
<polygon points="1951.9,1010.2 1951.9,1020.2 1962.3,1015.2" fill="#000"/>
<path d="M2000.5 1015.5L2008.8 1015.5" stroke="#000" stroke-width="1.15" fill="none"/>
<path d="M2035.8 1015.5L2045.8 1015.5" stroke="#000" stroke-width="1.15" fill="none"/>
<polygon points="2159.4,1010.8 2159.4,1019.8 2150,1015.3" fill="#000"/>
<polygon points="2009.4,1004.6 2009.4,1026.4 2036.7,1015.5" fill="#ffffcc" stroke="#000" stroke-width="1.05" stroke-linejoin="miter"/>
<polygon points="1951.9,1075.2 1951.9,1085.2 1962.3,1080.2" fill="#000"/>
<path d="M2000.5 1080.5L2008.8 1080.5" stroke="#000" stroke-width="1.15" fill="none"/>
<path d="M2035.8 1080.5L2045.8 1080.5" stroke="#000" stroke-width="1.15" fill="none"/>
<polygon points="2159.4,1075.8 2159.4,1084.8 2150,1080.3" fill="#000"/>
<polygon points="2009.4,1069.6 2009.4,1091.4 2036.7,1080.5" fill="#ffffcc" stroke="#000" stroke-width="1.05" stroke-linejoin="miter"/>
<polygon points="1951.9,1140.2 1951.9,1150.2 1962.3,1145.2" fill="#000"/>
<path d="M2000.5 1145.5L2008.8 1145.5" stroke="#000" stroke-width="1.15" fill="none"/>
<path d="M2035.8 1145.5L2045.8 1145.5" stroke="#000" stroke-width="1.15" fill="none"/>
<polygon points="2159.4,1140.8 2159.4,1149.8 2150,1145.3" fill="#000"/>
<polygon points="2009.4,1134.6 2009.4,1156.4 2036.7,1145.5" fill="#ffffcc" stroke="#000" stroke-width="1.05" stroke-linejoin="miter"/>
<polygon points="2177.6,681.3 2190.3,681.3 2197.6,688.5 2190.3,695.7 2177.6,695.7" fill="#fff" stroke="#000" stroke-width="2.7" stroke-linejoin="miter"/>
<polygon points="1969.9,1206.2 1969.9,1216.2 1980.3,1211.2" fill="#000"/>
<path d="M2000.5 1211.5L2008.8 1211.5" stroke="#000" stroke-width="1.15" fill="none"/>
<path d="M2035.8 1211.5L2045.8 1211.5" stroke="#000" stroke-width="1.15" fill="none"/>
<polygon points="2159.4,1206.8 2159.4,1215.8 2150,1211.3" fill="#000"/>
<polygon points="2009.4,1200.6 2009.4,1222.4 2036.7,1211.5" fill="#ffffcc" stroke="#000" stroke-width="1.05" stroke-linejoin="miter"/>
<polygon points="1969.9,1271.2 1969.9,1281.2 1980.3,1276.2" fill="#000"/>
<path d="M2000.5 1276.5L2008.8 1276.5" stroke="#000" stroke-width="1.15" fill="none"/>
<path d="M2035.8 1276.5L2045.8 1276.5" stroke="#000" stroke-width="1.15" fill="none"/>
<polygon points="2159.4,1271.8 2159.4,1280.8 2150,1276.3" fill="#000"/>
<polygon points="2009.4,1265.6 2009.4,1287.4 2036.7,1276.5" fill="#ffffcc" stroke="#000" stroke-width="1.05" stroke-linejoin="miter"/>
<polygon points="1969.9,1337.2 1969.9,1347.2 1980.3,1342.2" fill="#000"/>
<path d="M2000.5 1342.5L2008.8 1342.5" stroke="#000" stroke-width="1.15" fill="none"/>
<path d="M2035.8 1342.5L2045.8 1342.5" stroke="#000" stroke-width="1.15" fill="none"/>
<polygon points="2159.4,1337.8 2159.4,1346.8 2150,1342.3" fill="#000"/>
<polygon points="2009.4,1331.6 2009.4,1353.4 2036.7,1342.5" fill="#ffffcc" stroke="#000" stroke-width="1.05" stroke-linejoin="miter"/>
<polygon points="1969.9,1402.2 1969.9,1412.2 1980.3,1407.2" fill="#000"/>
<path d="M2000.5 1407.5L2008.8 1407.5" stroke="#000" stroke-width="1.15" fill="none"/>
<path d="M2035.8 1407.5L2045.8 1407.5" stroke="#000" stroke-width="1.15" fill="none"/>
<polygon points="2159.4,1402.8 2159.4,1411.8 2150,1407.3" fill="#000"/>
<polygon points="2009.4,1396.6 2009.4,1418.4 2036.7,1407.5" fill="#ffffcc" stroke="#000" stroke-width="1.05" stroke-linejoin="miter"/>
<polygon points="1969.9,1467.2 1969.9,1477.2 1980.3,1472.2" fill="#000"/>
<path d="M2000.5 1472.5L2008.8 1472.5" stroke="#000" stroke-width="1.15" fill="none"/>
<path d="M2035.8 1472.5L2045.8 1472.5" stroke="#000" stroke-width="1.15" fill="none"/>
<polygon points="2159.4,1467.8 2159.4,1476.8 2150,1472.3" fill="#000"/>
<polygon points="2009.4,1461.6 2009.4,1483.4 2036.7,1472.5" fill="#ffffcc" stroke="#000" stroke-width="1.05" stroke-linejoin="miter"/>
<polygon points="1969.9,1533.2 1969.9,1543.2 1980.3,1538.2" fill="#000"/>
<path d="M2000.5 1538.5L2008.8 1538.5" stroke="#000" stroke-width="1.15" fill="none"/>
<path d="M2035.8 1538.5L2045.8 1538.5" stroke="#000" stroke-width="1.15" fill="none"/>
<polygon points="2159.4,1533.8 2159.4,1542.8 2150,1538.3" fill="#000"/>
<polygon points="2009.4,1527.6 2009.4,1549.4 2036.7,1538.5" fill="#ffffcc" stroke="#000" stroke-width="1.05" stroke-linejoin="miter"/>
<polygon points="1969.9,1598.2 1969.9,1608.2 1980.3,1603.2" fill="#000"/>
<path d="M2000.5 1603.5L2008.8 1603.5" stroke="#000" stroke-width="1.15" fill="none"/>
<path d="M2035.8 1603.5L2045.8 1603.5" stroke="#000" stroke-width="1.15" fill="none"/>
<polygon points="2159.4,1598.8 2159.4,1607.8 2150,1603.3" fill="#000"/>
<polygon points="2009.4,1592.6 2009.4,1614.4 2036.7,1603.5" fill="#ffffcc" stroke="#000" stroke-width="1.05" stroke-linejoin="miter"/>
<polygon points="1969.9,1664.2 1969.9,1674.2 1980.3,1669.2" fill="#000"/>
<path d="M2000.5 1669.5L2008.8 1669.5" stroke="#000" stroke-width="1.15" fill="none"/>
<path d="M2035.8 1669.5L2045.8 1669.5" stroke="#000" stroke-width="1.15" fill="none"/>
<polygon points="2159.4,1664.8 2159.4,1673.8 2150,1669.3" fill="#000"/>
<polygon points="2009.4,1658.6 2009.4,1680.4 2036.7,1669.5" fill="#ffffcc" stroke="#000" stroke-width="1.05" stroke-linejoin="miter"/>
<polygon points="2177.6,1204.3 2190.3,1204.3 2197.6,1211.5 2190.3,1218.7 2177.6,1218.7" fill="#fff" stroke="#000" stroke-width="2.7" stroke-linejoin="miter"/>
<text x="1317.2" y="240.9" font-size="12.5" text-anchor="start" fill="#161616" stroke="#161616" stroke-width="0.18" textLength="97.8" lengthAdjust="spacingAndGlyphs">a_sv_IBUF[0]_inst</text>
<text x="1317.4" y="282.9" font-size="12.5" text-anchor="start" fill="#161616" stroke="#161616" stroke-width="0.18" textLength="25.8" lengthAdjust="spacingAndGlyphs">IBUF</text>
<text x="1297.2" y="253.9" font-size="11" text-anchor="start" fill="#161616" stroke="#161616" stroke-width="0.18">I</text>
<text x="1344" y="253.9" font-size="11" text-anchor="start" fill="#161616" stroke="#161616" stroke-width="0.18" textLength="7.8" lengthAdjust="spacingAndGlyphs">O</text>
<text x="1280.7" y="254.7" font-size="9" text-anchor="start" fill="#333" stroke="#333" stroke-width="0.18">0</text>
<text x="1468.2" y="254.7" font-size="9" text-anchor="end" fill="#333" stroke="#333" stroke-width="0.18">0</text>
<text x="1317.2" y="305.9" font-size="12.5" text-anchor="start" fill="#161616" stroke="#161616" stroke-width="0.18" textLength="97.8" lengthAdjust="spacingAndGlyphs">a_sv_IBUF[1]_inst</text>
<text x="1317.4" y="347.9" font-size="12.5" text-anchor="start" fill="#161616" stroke="#161616" stroke-width="0.18" textLength="25.8" lengthAdjust="spacingAndGlyphs">IBUF</text>
<text x="1297.2" y="318.9" font-size="11" text-anchor="start" fill="#161616" stroke="#161616" stroke-width="0.18">I</text>
<text x="1344" y="318.9" font-size="11" text-anchor="start" fill="#161616" stroke="#161616" stroke-width="0.18" textLength="7.8" lengthAdjust="spacingAndGlyphs">O</text>
<text x="1280.7" y="319.7" font-size="9" text-anchor="start" fill="#333" stroke="#333" stroke-width="0.18">1</text>
<text x="1468.2" y="319.7" font-size="9" text-anchor="end" fill="#333" stroke="#333" stroke-width="0.18">1</text>
<text x="1317.2" y="371.9" font-size="12.5" text-anchor="start" fill="#161616" stroke="#161616" stroke-width="0.18" textLength="97.8" lengthAdjust="spacingAndGlyphs">a_sv_IBUF[2]_inst</text>
<text x="1317.4" y="413.9" font-size="12.5" text-anchor="start" fill="#161616" stroke="#161616" stroke-width="0.18" textLength="25.8" lengthAdjust="spacingAndGlyphs">IBUF</text>
<text x="1297.2" y="384.9" font-size="11" text-anchor="start" fill="#161616" stroke="#161616" stroke-width="0.18">I</text>
<text x="1344" y="384.9" font-size="11" text-anchor="start" fill="#161616" stroke="#161616" stroke-width="0.18" textLength="7.8" lengthAdjust="spacingAndGlyphs">O</text>
<text x="1280.7" y="385.7" font-size="9" text-anchor="start" fill="#333" stroke="#333" stroke-width="0.18">2</text>
<text x="1468.2" y="385.7" font-size="9" text-anchor="end" fill="#333" stroke="#333" stroke-width="0.18">2</text>
<text x="1221.6" y="263.3" font-size="12.5" text-anchor="end" fill="#161616" stroke="#161616" stroke-width="0.18" textLength="49.5" lengthAdjust="spacingAndGlyphs">a_sv[2:0]</text>
<text x="1317.2" y="707.9" font-size="12.5" text-anchor="start" fill="#161616" stroke="#161616" stroke-width="0.18" textLength="92.8" lengthAdjust="spacingAndGlyphs">a_v_IBUF[0]_inst</text>
<text x="1317.4" y="749.9" font-size="12.5" text-anchor="start" fill="#161616" stroke="#161616" stroke-width="0.18" textLength="25.8" lengthAdjust="spacingAndGlyphs">IBUF</text>
<text x="1297.2" y="720.9" font-size="11" text-anchor="start" fill="#161616" stroke="#161616" stroke-width="0.18">I</text>
<text x="1344" y="720.9" font-size="11" text-anchor="start" fill="#161616" stroke="#161616" stroke-width="0.18" textLength="7.8" lengthAdjust="spacingAndGlyphs">O</text>
<text x="1280.7" y="721.7" font-size="9" text-anchor="start" fill="#333" stroke="#333" stroke-width="0.18">0</text>
<text x="1468.2" y="721.7" font-size="9" text-anchor="end" fill="#333" stroke="#333" stroke-width="0.18">0</text>
<text x="1317.2" y="772.9" font-size="12.5" text-anchor="start" fill="#161616" stroke="#161616" stroke-width="0.18" textLength="92.8" lengthAdjust="spacingAndGlyphs">a_v_IBUF[1]_inst</text>
<text x="1317.4" y="814.9" font-size="12.5" text-anchor="start" fill="#161616" stroke="#161616" stroke-width="0.18" textLength="25.8" lengthAdjust="spacingAndGlyphs">IBUF</text>
<text x="1297.2" y="785.9" font-size="11" text-anchor="start" fill="#161616" stroke="#161616" stroke-width="0.18">I</text>
<text x="1344" y="785.9" font-size="11" text-anchor="start" fill="#161616" stroke="#161616" stroke-width="0.18" textLength="7.8" lengthAdjust="spacingAndGlyphs">O</text>
<text x="1280.7" y="786.7" font-size="9" text-anchor="start" fill="#333" stroke="#333" stroke-width="0.18">1</text>
<text x="1468.2" y="786.7" font-size="9" text-anchor="end" fill="#333" stroke="#333" stroke-width="0.18">1</text>
<text x="1317.2" y="838.9" font-size="12.5" text-anchor="start" fill="#161616" stroke="#161616" stroke-width="0.18" textLength="92.8" lengthAdjust="spacingAndGlyphs">a_v_IBUF[2]_inst</text>
<text x="1317.4" y="880.9" font-size="12.5" text-anchor="start" fill="#161616" stroke="#161616" stroke-width="0.18" textLength="25.8" lengthAdjust="spacingAndGlyphs">IBUF</text>
<text x="1297.2" y="851.9" font-size="11" text-anchor="start" fill="#161616" stroke="#161616" stroke-width="0.18">I</text>
<text x="1344" y="851.9" font-size="11" text-anchor="start" fill="#161616" stroke="#161616" stroke-width="0.18" textLength="7.8" lengthAdjust="spacingAndGlyphs">O</text>
<text x="1280.7" y="852.7" font-size="9" text-anchor="start" fill="#333" stroke="#333" stroke-width="0.18">2</text>
<text x="1468.2" y="852.7" font-size="9" text-anchor="end" fill="#333" stroke="#333" stroke-width="0.18">2</text>
<text x="1221.6" y="730.3" font-size="12.5" text-anchor="end" fill="#161616" stroke="#161616" stroke-width="0.18" textLength="44.2" lengthAdjust="spacingAndGlyphs">a_v[2:0]</text>
<text x="1317.2" y="1062.9" font-size="12.5" text-anchor="start" fill="#161616" stroke="#161616" stroke-width="0.18" textLength="107.9" lengthAdjust="spacingAndGlyphs">a_vhd_IBUF[0]_inst</text>
<text x="1317.4" y="1104.9" font-size="12.5" text-anchor="start" fill="#161616" stroke="#161616" stroke-width="0.18" textLength="25.8" lengthAdjust="spacingAndGlyphs">IBUF</text>
<text x="1297.2" y="1075.9" font-size="11" text-anchor="start" fill="#161616" stroke="#161616" stroke-width="0.18">I</text>
<text x="1344" y="1075.9" font-size="11" text-anchor="start" fill="#161616" stroke="#161616" stroke-width="0.18" textLength="7.8" lengthAdjust="spacingAndGlyphs">O</text>
<text x="1280.7" y="1076.7" font-size="9" text-anchor="start" fill="#333" stroke="#333" stroke-width="0.18">0</text>
<text x="1450.2" y="1076.7" font-size="9" text-anchor="end" fill="#333" stroke="#333" stroke-width="0.18">0</text>
<text x="1317.2" y="1127.9" font-size="12.5" text-anchor="start" fill="#161616" stroke="#161616" stroke-width="0.18" textLength="107.9" lengthAdjust="spacingAndGlyphs">a_vhd_IBUF[1]_inst</text>
<text x="1317.4" y="1169.9" font-size="12.5" text-anchor="start" fill="#161616" stroke="#161616" stroke-width="0.18" textLength="25.8" lengthAdjust="spacingAndGlyphs">IBUF</text>
<text x="1297.2" y="1140.9" font-size="11" text-anchor="start" fill="#161616" stroke="#161616" stroke-width="0.18">I</text>
<text x="1344" y="1140.9" font-size="11" text-anchor="start" fill="#161616" stroke="#161616" stroke-width="0.18" textLength="7.8" lengthAdjust="spacingAndGlyphs">O</text>
<text x="1280.7" y="1141.7" font-size="9" text-anchor="start" fill="#333" stroke="#333" stroke-width="0.18">1</text>
<text x="1450.2" y="1141.7" font-size="9" text-anchor="end" fill="#333" stroke="#333" stroke-width="0.18">1</text>
<text x="1317.2" y="1193.9" font-size="12.5" text-anchor="start" fill="#161616" stroke="#161616" stroke-width="0.18" textLength="107.9" lengthAdjust="spacingAndGlyphs">a_vhd_IBUF[2]_inst</text>
<text x="1317.4" y="1235.9" font-size="12.5" text-anchor="start" fill="#161616" stroke="#161616" stroke-width="0.18" textLength="25.8" lengthAdjust="spacingAndGlyphs">IBUF</text>
<text x="1297.2" y="1206.9" font-size="11" text-anchor="start" fill="#161616" stroke="#161616" stroke-width="0.18">I</text>
<text x="1344" y="1206.9" font-size="11" text-anchor="start" fill="#161616" stroke="#161616" stroke-width="0.18" textLength="7.8" lengthAdjust="spacingAndGlyphs">O</text>
<text x="1280.7" y="1207.7" font-size="9" text-anchor="start" fill="#333" stroke="#333" stroke-width="0.18">2</text>
<text x="1450.2" y="1207.7" font-size="9" text-anchor="end" fill="#333" stroke="#333" stroke-width="0.18">2</text>
<text x="1221.6" y="1085.3" font-size="12.5" text-anchor="end" fill="#161616" stroke="#161616" stroke-width="0.18" textLength="58.8" lengthAdjust="spacingAndGlyphs">a_vhd[2:0]</text>
<text x="1709.6" y="305.9" font-size="12.5" text-anchor="middle" fill="#161616" stroke="#161616" stroke-width="0.18" textLength="14.6" lengthAdjust="spacingAndGlyphs">SV</text>
<text x="1709.2" y="1156.8" font-size="12.5" text-anchor="middle" fill="#161616" stroke="#161616" stroke-width="0.18" textLength="86.5" lengthAdjust="spacingAndGlyphs">decoder3_8_sv</text>
<text x="1709" y="1518.7" font-size="12.5" text-anchor="middle" fill="#161616" stroke="#161616" stroke-width="0.18" textLength="7.8" lengthAdjust="spacingAndGlyphs">V</text>
<text x="1511" y="344" font-size="11" text-anchor="start" fill="#161616" stroke="#161616" stroke-width="0.18" textLength="68.6" lengthAdjust="spacingAndGlyphs">a_sv_IBUF[2:0]</text>
<text x="1516" y="1557" font-size="11" text-anchor="start" fill="#161616" stroke="#161616" stroke-width="0.18" textLength="63.8" lengthAdjust="spacingAndGlyphs">a_v_IBUF[2:0]</text>
<text x="1626.5" y="346" font-size="9" text-anchor="start" fill="#333" stroke="#333" stroke-width="0.18">2</text>
<text x="1626.5" y="365" font-size="9" text-anchor="start" fill="#333" stroke="#333" stroke-width="0.18">0</text>
<text x="1626.5" y="384" font-size="9" text-anchor="start" fill="#333" stroke="#333" stroke-width="0.18">1</text>
<text x="1795.3" y="365" font-size="9" text-anchor="end" fill="#333" stroke="#333" stroke-width="0.18">0</text>
<text x="1709.6" y="334.3" font-size="12.5" text-anchor="middle" fill="#161616" stroke="#161616" stroke-width="0.18" textLength="125.2" lengthAdjust="spacingAndGlyphs">y_sv_OBUF[0]_inst_i_1</text>
<text x="1709.9" y="409.8" font-size="12.5" text-anchor="middle" fill="#161616" stroke="#161616" stroke-width="0.18" textLength="28.9" lengthAdjust="spacingAndGlyphs">LUT3</text>
<text x="1690.8" y="352.9" font-size="11" text-anchor="start" fill="#161616" stroke="#161616" stroke-width="0.18" textLength="8.4" lengthAdjust="spacingAndGlyphs">I0</text>
<text x="1690.8" y="371.9" font-size="11" text-anchor="start" fill="#161616" stroke="#161616" stroke-width="0.18" textLength="8.4" lengthAdjust="spacingAndGlyphs">I1</text>
<text x="1690.8" y="390.9" font-size="11" text-anchor="start" fill="#161616" stroke="#161616" stroke-width="0.18" textLength="8.4" lengthAdjust="spacingAndGlyphs">I2</text>
<text x="1722.3" y="371.9" font-size="11" text-anchor="start" fill="#161616" stroke="#161616" stroke-width="0.18" textLength="8" lengthAdjust="spacingAndGlyphs">O</text>
<text x="1626.5" y="449" font-size="9" text-anchor="start" fill="#333" stroke="#333" stroke-width="0.18">2</text>
<text x="1626.5" y="468" font-size="9" text-anchor="start" fill="#333" stroke="#333" stroke-width="0.18">0</text>
<text x="1626.5" y="487" font-size="9" text-anchor="start" fill="#333" stroke="#333" stroke-width="0.18">1</text>
<text x="1795.3" y="468" font-size="9" text-anchor="end" fill="#333" stroke="#333" stroke-width="0.18">1</text>
<text x="1709.6" y="437.3" font-size="12.5" text-anchor="middle" fill="#161616" stroke="#161616" stroke-width="0.18" textLength="125.2" lengthAdjust="spacingAndGlyphs">y_sv_OBUF[1]_inst_i_1</text>
<text x="1709.9" y="512.8" font-size="12.5" text-anchor="middle" fill="#161616" stroke="#161616" stroke-width="0.18" textLength="28.9" lengthAdjust="spacingAndGlyphs">LUT3</text>
<text x="1690.8" y="455.9" font-size="11" text-anchor="start" fill="#161616" stroke="#161616" stroke-width="0.18" textLength="8.4" lengthAdjust="spacingAndGlyphs">I0</text>
<text x="1690.8" y="474.9" font-size="11" text-anchor="start" fill="#161616" stroke="#161616" stroke-width="0.18" textLength="8.4" lengthAdjust="spacingAndGlyphs">I1</text>
<text x="1690.8" y="493.9" font-size="11" text-anchor="start" fill="#161616" stroke="#161616" stroke-width="0.18" textLength="8.4" lengthAdjust="spacingAndGlyphs">I2</text>
<text x="1722.3" y="474.9" font-size="11" text-anchor="start" fill="#161616" stroke="#161616" stroke-width="0.18" textLength="8" lengthAdjust="spacingAndGlyphs">O</text>
<text x="1626.5" y="552" font-size="9" text-anchor="start" fill="#333" stroke="#333" stroke-width="0.18">0</text>
<text x="1626.5" y="571" font-size="9" text-anchor="start" fill="#333" stroke="#333" stroke-width="0.18">1</text>
<text x="1626.5" y="589" font-size="9" text-anchor="start" fill="#333" stroke="#333" stroke-width="0.18">2</text>
<text x="1795.3" y="571" font-size="9" text-anchor="end" fill="#333" stroke="#333" stroke-width="0.18">2</text>
<text x="1709.6" y="540.3" font-size="12.5" text-anchor="middle" fill="#161616" stroke="#161616" stroke-width="0.18" textLength="125.2" lengthAdjust="spacingAndGlyphs">y_sv_OBUF[2]_inst_i_1</text>
<text x="1709.9" y="615.8" font-size="12.5" text-anchor="middle" fill="#161616" stroke="#161616" stroke-width="0.18" textLength="28.9" lengthAdjust="spacingAndGlyphs">LUT3</text>
<text x="1690.8" y="558.9" font-size="11" text-anchor="start" fill="#161616" stroke="#161616" stroke-width="0.18" textLength="8.4" lengthAdjust="spacingAndGlyphs">I0</text>
<text x="1690.8" y="577.9" font-size="11" text-anchor="start" fill="#161616" stroke="#161616" stroke-width="0.18" textLength="8.4" lengthAdjust="spacingAndGlyphs">I1</text>
<text x="1690.8" y="595.9" font-size="11" text-anchor="start" fill="#161616" stroke="#161616" stroke-width="0.18" textLength="8.4" lengthAdjust="spacingAndGlyphs">I2</text>
<text x="1722.3" y="577.9" font-size="11" text-anchor="start" fill="#161616" stroke="#161616" stroke-width="0.18" textLength="8" lengthAdjust="spacingAndGlyphs">O</text>
<text x="1626.5" y="655" font-size="9" text-anchor="start" fill="#333" stroke="#333" stroke-width="0.18">1</text>
<text x="1626.5" y="673" font-size="9" text-anchor="start" fill="#333" stroke="#333" stroke-width="0.18">0</text>
<text x="1626.5" y="692" font-size="9" text-anchor="start" fill="#333" stroke="#333" stroke-width="0.18">2</text>
<text x="1795.3" y="673" font-size="9" text-anchor="end" fill="#333" stroke="#333" stroke-width="0.18">3</text>
<text x="1709.6" y="642.3" font-size="12.5" text-anchor="middle" fill="#161616" stroke="#161616" stroke-width="0.18" textLength="125.2" lengthAdjust="spacingAndGlyphs">y_sv_OBUF[3]_inst_i_1</text>
<text x="1709.9" y="717.8" font-size="12.5" text-anchor="middle" fill="#161616" stroke="#161616" stroke-width="0.18" textLength="28.9" lengthAdjust="spacingAndGlyphs">LUT3</text>
<text x="1690.8" y="661.9" font-size="11" text-anchor="start" fill="#161616" stroke="#161616" stroke-width="0.18" textLength="8.4" lengthAdjust="spacingAndGlyphs">I0</text>
<text x="1690.8" y="679.9" font-size="11" text-anchor="start" fill="#161616" stroke="#161616" stroke-width="0.18" textLength="8.4" lengthAdjust="spacingAndGlyphs">I1</text>
<text x="1690.8" y="698.9" font-size="11" text-anchor="start" fill="#161616" stroke="#161616" stroke-width="0.18" textLength="8.4" lengthAdjust="spacingAndGlyphs">I2</text>
<text x="1722.3" y="679.9" font-size="11" text-anchor="start" fill="#161616" stroke="#161616" stroke-width="0.18" textLength="8" lengthAdjust="spacingAndGlyphs">O</text>
<text x="1626.5" y="757" font-size="9" text-anchor="start" fill="#333" stroke="#333" stroke-width="0.18">0</text>
<text x="1626.5" y="776" font-size="9" text-anchor="start" fill="#333" stroke="#333" stroke-width="0.18">2</text>
<text x="1626.5" y="795" font-size="9" text-anchor="start" fill="#333" stroke="#333" stroke-width="0.18">1</text>
<text x="1795.3" y="776" font-size="9" text-anchor="end" fill="#333" stroke="#333" stroke-width="0.18">4</text>
<text x="1709.6" y="745.3" font-size="12.5" text-anchor="middle" fill="#161616" stroke="#161616" stroke-width="0.18" textLength="125.2" lengthAdjust="spacingAndGlyphs">y_sv_OBUF[4]_inst_i_1</text>
<text x="1709.9" y="820.8" font-size="12.5" text-anchor="middle" fill="#161616" stroke="#161616" stroke-width="0.18" textLength="28.9" lengthAdjust="spacingAndGlyphs">LUT3</text>
<text x="1690.8" y="763.9" font-size="11" text-anchor="start" fill="#161616" stroke="#161616" stroke-width="0.18" textLength="8.4" lengthAdjust="spacingAndGlyphs">I0</text>
<text x="1690.8" y="782.9" font-size="11" text-anchor="start" fill="#161616" stroke="#161616" stroke-width="0.18" textLength="8.4" lengthAdjust="spacingAndGlyphs">I1</text>
<text x="1690.8" y="801.9" font-size="11" text-anchor="start" fill="#161616" stroke="#161616" stroke-width="0.18" textLength="8.4" lengthAdjust="spacingAndGlyphs">I2</text>
<text x="1722.3" y="782.9" font-size="11" text-anchor="start" fill="#161616" stroke="#161616" stroke-width="0.18" textLength="8" lengthAdjust="spacingAndGlyphs">O</text>
<text x="1626.5" y="860" font-size="9" text-anchor="start" fill="#333" stroke="#333" stroke-width="0.18">2</text>
<text x="1626.5" y="879" font-size="9" text-anchor="start" fill="#333" stroke="#333" stroke-width="0.18">0</text>
<text x="1626.5" y="898" font-size="9" text-anchor="start" fill="#333" stroke="#333" stroke-width="0.18">1</text>
<text x="1795.3" y="879" font-size="9" text-anchor="end" fill="#333" stroke="#333" stroke-width="0.18">5</text>
<text x="1709.6" y="848.3" font-size="12.5" text-anchor="middle" fill="#161616" stroke="#161616" stroke-width="0.18" textLength="125.2" lengthAdjust="spacingAndGlyphs">y_sv_OBUF[5]_inst_i_1</text>
<text x="1709.9" y="923.8" font-size="12.5" text-anchor="middle" fill="#161616" stroke="#161616" stroke-width="0.18" textLength="28.9" lengthAdjust="spacingAndGlyphs">LUT3</text>
<text x="1690.8" y="866.9" font-size="11" text-anchor="start" fill="#161616" stroke="#161616" stroke-width="0.18" textLength="8.4" lengthAdjust="spacingAndGlyphs">I0</text>
<text x="1690.8" y="885.9" font-size="11" text-anchor="start" fill="#161616" stroke="#161616" stroke-width="0.18" textLength="8.4" lengthAdjust="spacingAndGlyphs">I1</text>
<text x="1690.8" y="904.9" font-size="11" text-anchor="start" fill="#161616" stroke="#161616" stroke-width="0.18" textLength="8.4" lengthAdjust="spacingAndGlyphs">I2</text>
<text x="1722.3" y="885.9" font-size="11" text-anchor="start" fill="#161616" stroke="#161616" stroke-width="0.18" textLength="8" lengthAdjust="spacingAndGlyphs">O</text>
<text x="1626.5" y="963" font-size="9" text-anchor="start" fill="#333" stroke="#333" stroke-width="0.18">1</text>
<text x="1626.5" y="982" font-size="9" text-anchor="start" fill="#333" stroke="#333" stroke-width="0.18">2</text>
<text x="1626.5" y="1000" font-size="9" text-anchor="start" fill="#333" stroke="#333" stroke-width="0.18">0</text>
<text x="1795.3" y="982" font-size="9" text-anchor="end" fill="#333" stroke="#333" stroke-width="0.18">6</text>
<text x="1709.6" y="951.3" font-size="12.5" text-anchor="middle" fill="#161616" stroke="#161616" stroke-width="0.18" textLength="125.2" lengthAdjust="spacingAndGlyphs">y_sv_OBUF[6]_inst_i_1</text>
<text x="1709.9" y="1026.8" font-size="12.5" text-anchor="middle" fill="#161616" stroke="#161616" stroke-width="0.18" textLength="28.9" lengthAdjust="spacingAndGlyphs">LUT3</text>
<text x="1690.8" y="969.9" font-size="11" text-anchor="start" fill="#161616" stroke="#161616" stroke-width="0.18" textLength="8.4" lengthAdjust="spacingAndGlyphs">I0</text>
<text x="1690.8" y="988.9" font-size="11" text-anchor="start" fill="#161616" stroke="#161616" stroke-width="0.18" textLength="8.4" lengthAdjust="spacingAndGlyphs">I1</text>
<text x="1690.8" y="1006.9" font-size="11" text-anchor="start" fill="#161616" stroke="#161616" stroke-width="0.18" textLength="8.4" lengthAdjust="spacingAndGlyphs">I2</text>
<text x="1722.3" y="988.9" font-size="11" text-anchor="start" fill="#161616" stroke="#161616" stroke-width="0.18" textLength="8" lengthAdjust="spacingAndGlyphs">O</text>
<text x="1626.5" y="1066" font-size="9" text-anchor="start" fill="#333" stroke="#333" stroke-width="0.18">1</text>
<text x="1626.5" y="1084" font-size="9" text-anchor="start" fill="#333" stroke="#333" stroke-width="0.18">2</text>
<text x="1626.5" y="1103" font-size="9" text-anchor="start" fill="#333" stroke="#333" stroke-width="0.18">0</text>
<text x="1795.3" y="1084" font-size="9" text-anchor="end" fill="#333" stroke="#333" stroke-width="0.18">7</text>
<text x="1709.6" y="1053.3" font-size="12.5" text-anchor="middle" fill="#1414f0" stroke="#1414f0" stroke-width="0.18" textLength="125.2" lengthAdjust="spacingAndGlyphs">y_sv_OBUF[7]_inst_i_1</text>
<text x="1709.9" y="1128.8" font-size="12.5" text-anchor="middle" fill="#1414f0" stroke="#1414f0" stroke-width="0.18" textLength="28.9" lengthAdjust="spacingAndGlyphs">LUT3</text>
<text x="1690.8" y="1072.9" font-size="11" text-anchor="start" fill="#1414f0" stroke="#1414f0" stroke-width="0.18" textLength="8.4" lengthAdjust="spacingAndGlyphs">I0</text>
<text x="1690.8" y="1090.9" font-size="11" text-anchor="start" fill="#1414f0" stroke="#1414f0" stroke-width="0.18" textLength="8.4" lengthAdjust="spacingAndGlyphs">I1</text>
<text x="1690.8" y="1109.9" font-size="11" text-anchor="start" fill="#1414f0" stroke="#1414f0" stroke-width="0.18" textLength="8.4" lengthAdjust="spacingAndGlyphs">I2</text>
<text x="1722.3" y="1090.9" font-size="11" text-anchor="start" fill="#1414f0" stroke="#1414f0" stroke-width="0.18" textLength="8" lengthAdjust="spacingAndGlyphs">O</text>
<text x="1838.8" y="364.2" font-size="11" text-anchor="start" fill="#161616" stroke="#161616" stroke-width="0.18" textLength="73.2" lengthAdjust="spacingAndGlyphs">y_sv_OBUF[7:0]</text>
<text x="1626.5" y="1559" font-size="9" text-anchor="start" fill="#333" stroke="#333" stroke-width="0.18">2</text>
<text x="1626.5" y="1578" font-size="9" text-anchor="start" fill="#333" stroke="#333" stroke-width="0.18">0</text>
<text x="1626.5" y="1596" font-size="9" text-anchor="start" fill="#333" stroke="#333" stroke-width="0.18">1</text>
<text x="1795.3" y="1578" font-size="9" text-anchor="end" fill="#333" stroke="#333" stroke-width="0.18">0</text>
<text x="1709.6" y="1547.3" font-size="12.5" text-anchor="middle" fill="#161616" stroke="#161616" stroke-width="0.18" textLength="120.2" lengthAdjust="spacingAndGlyphs">y_v_OBUF[0]_inst_i_1</text>
<text x="1709.9" y="1622.8" font-size="12.5" text-anchor="middle" fill="#161616" stroke="#161616" stroke-width="0.18" textLength="28.9" lengthAdjust="spacingAndGlyphs">LUT3</text>
<text x="1690.8" y="1565.9" font-size="11" text-anchor="start" fill="#161616" stroke="#161616" stroke-width="0.18" textLength="8.4" lengthAdjust="spacingAndGlyphs">I0</text>
<text x="1690.8" y="1584.9" font-size="11" text-anchor="start" fill="#161616" stroke="#161616" stroke-width="0.18" textLength="8.4" lengthAdjust="spacingAndGlyphs">I1</text>
<text x="1690.8" y="1602.9" font-size="11" text-anchor="start" fill="#161616" stroke="#161616" stroke-width="0.18" textLength="8.4" lengthAdjust="spacingAndGlyphs">I2</text>
<text x="1722.3" y="1584.9" font-size="11" text-anchor="start" fill="#161616" stroke="#161616" stroke-width="0.18" textLength="8" lengthAdjust="spacingAndGlyphs">O</text>
<text x="1626.5" y="1662" font-size="9" text-anchor="start" fill="#333" stroke="#333" stroke-width="0.18">2</text>
<text x="1626.5" y="1681" font-size="9" text-anchor="start" fill="#333" stroke="#333" stroke-width="0.18">0</text>
<text x="1626.5" y="1699" font-size="9" text-anchor="start" fill="#333" stroke="#333" stroke-width="0.18">1</text>
<text x="1795.3" y="1681" font-size="9" text-anchor="end" fill="#333" stroke="#333" stroke-width="0.18">1</text>
<text x="1709.6" y="1650.3" font-size="12.5" text-anchor="middle" fill="#161616" stroke="#161616" stroke-width="0.18" textLength="120.2" lengthAdjust="spacingAndGlyphs">y_v_OBUF[1]_inst_i_1</text>
<text x="1709.9" y="1725.8" font-size="12.5" text-anchor="middle" fill="#161616" stroke="#161616" stroke-width="0.18" textLength="28.9" lengthAdjust="spacingAndGlyphs">LUT3</text>
<text x="1690.8" y="1668.9" font-size="11" text-anchor="start" fill="#161616" stroke="#161616" stroke-width="0.18" textLength="8.4" lengthAdjust="spacingAndGlyphs">I0</text>
<text x="1690.8" y="1687.9" font-size="11" text-anchor="start" fill="#161616" stroke="#161616" stroke-width="0.18" textLength="8.4" lengthAdjust="spacingAndGlyphs">I1</text>
<text x="1690.8" y="1705.9" font-size="11" text-anchor="start" fill="#161616" stroke="#161616" stroke-width="0.18" textLength="8.4" lengthAdjust="spacingAndGlyphs">I2</text>
<text x="1722.3" y="1687.9" font-size="11" text-anchor="start" fill="#161616" stroke="#161616" stroke-width="0.18" textLength="8" lengthAdjust="spacingAndGlyphs">O</text>
<text x="1839" y="1577" font-size="11" text-anchor="start" fill="#161616" stroke="#161616" stroke-width="0.18" textLength="68.4" lengthAdjust="spacingAndGlyphs">y_v_OBUF[7:0]</text>
<text x="2018" y="146.9" font-size="12.5" text-anchor="start" fill="#161616" stroke="#161616" stroke-width="0.18" textLength="105" lengthAdjust="spacingAndGlyphs">y_sv_OBUF[0]_inst</text>
<text x="2018.2" y="188.9" font-size="12.5" text-anchor="start" fill="#161616" stroke="#161616" stroke-width="0.18" textLength="32.8" lengthAdjust="spacingAndGlyphs">OBUF</text>
<text x="1998" y="159.9" font-size="11" text-anchor="start" fill="#161616" stroke="#161616" stroke-width="0.18">I</text>
<text x="2044.8" y="159.9" font-size="11" text-anchor="start" fill="#161616" stroke="#161616" stroke-width="0.18" textLength="7.8" lengthAdjust="spacingAndGlyphs">O</text>
<text x="1962.7" y="160.7" font-size="9" text-anchor="start" fill="#333" stroke="#333" stroke-width="0.18">0</text>
<text x="2150.2" y="160.7" font-size="9" text-anchor="end" fill="#333" stroke="#333" stroke-width="0.18">0</text>
<text x="2018" y="212.9" font-size="12.5" text-anchor="start" fill="#161616" stroke="#161616" stroke-width="0.18" textLength="105" lengthAdjust="spacingAndGlyphs">y_sv_OBUF[1]_inst</text>
<text x="2018.2" y="254.9" font-size="12.5" text-anchor="start" fill="#161616" stroke="#161616" stroke-width="0.18" textLength="32.8" lengthAdjust="spacingAndGlyphs">OBUF</text>
<text x="1998" y="225.9" font-size="11" text-anchor="start" fill="#161616" stroke="#161616" stroke-width="0.18">I</text>
<text x="2044.8" y="225.9" font-size="11" text-anchor="start" fill="#161616" stroke="#161616" stroke-width="0.18" textLength="7.8" lengthAdjust="spacingAndGlyphs">O</text>
<text x="1962.7" y="226.7" font-size="9" text-anchor="start" fill="#333" stroke="#333" stroke-width="0.18">1</text>
<text x="2150.2" y="226.7" font-size="9" text-anchor="end" fill="#333" stroke="#333" stroke-width="0.18">1</text>
<text x="2018" y="277.9" font-size="12.5" text-anchor="start" fill="#161616" stroke="#161616" stroke-width="0.18" textLength="105" lengthAdjust="spacingAndGlyphs">y_sv_OBUF[2]_inst</text>
<text x="2018.2" y="319.9" font-size="12.5" text-anchor="start" fill="#161616" stroke="#161616" stroke-width="0.18" textLength="32.8" lengthAdjust="spacingAndGlyphs">OBUF</text>
<text x="1998" y="290.9" font-size="11" text-anchor="start" fill="#161616" stroke="#161616" stroke-width="0.18">I</text>
<text x="2044.8" y="290.9" font-size="11" text-anchor="start" fill="#161616" stroke="#161616" stroke-width="0.18" textLength="7.8" lengthAdjust="spacingAndGlyphs">O</text>
<text x="1962.7" y="291.7" font-size="9" text-anchor="start" fill="#333" stroke="#333" stroke-width="0.18">2</text>
<text x="2150.2" y="291.7" font-size="9" text-anchor="end" fill="#333" stroke="#333" stroke-width="0.18">2</text>
<text x="2018" y="343.9" font-size="12.5" text-anchor="start" fill="#161616" stroke="#161616" stroke-width="0.18" textLength="105" lengthAdjust="spacingAndGlyphs">y_sv_OBUF[3]_inst</text>
<text x="2018.2" y="385.9" font-size="12.5" text-anchor="start" fill="#161616" stroke="#161616" stroke-width="0.18" textLength="32.8" lengthAdjust="spacingAndGlyphs">OBUF</text>
<text x="1998" y="356.9" font-size="11" text-anchor="start" fill="#161616" stroke="#161616" stroke-width="0.18">I</text>
<text x="2044.8" y="356.9" font-size="11" text-anchor="start" fill="#161616" stroke="#161616" stroke-width="0.18" textLength="7.8" lengthAdjust="spacingAndGlyphs">O</text>
<text x="1962.7" y="357.7" font-size="9" text-anchor="start" fill="#333" stroke="#333" stroke-width="0.18">3</text>
<text x="2150.2" y="357.7" font-size="9" text-anchor="end" fill="#333" stroke="#333" stroke-width="0.18">3</text>
<text x="2018" y="408.9" font-size="12.5" text-anchor="start" fill="#161616" stroke="#161616" stroke-width="0.18" textLength="105" lengthAdjust="spacingAndGlyphs">y_sv_OBUF[4]_inst</text>
<text x="2018.2" y="450.9" font-size="12.5" text-anchor="start" fill="#161616" stroke="#161616" stroke-width="0.18" textLength="32.8" lengthAdjust="spacingAndGlyphs">OBUF</text>
<text x="1998" y="421.9" font-size="11" text-anchor="start" fill="#161616" stroke="#161616" stroke-width="0.18">I</text>
<text x="2044.8" y="421.9" font-size="11" text-anchor="start" fill="#161616" stroke="#161616" stroke-width="0.18" textLength="7.8" lengthAdjust="spacingAndGlyphs">O</text>
<text x="1962.7" y="422.7" font-size="9" text-anchor="start" fill="#333" stroke="#333" stroke-width="0.18">4</text>
<text x="2150.2" y="422.7" font-size="9" text-anchor="end" fill="#333" stroke="#333" stroke-width="0.18">4</text>
<text x="2018" y="473.9" font-size="12.5" text-anchor="start" fill="#161616" stroke="#161616" stroke-width="0.18" textLength="105" lengthAdjust="spacingAndGlyphs">y_sv_OBUF[5]_inst</text>
<text x="2018.2" y="515.9" font-size="12.5" text-anchor="start" fill="#161616" stroke="#161616" stroke-width="0.18" textLength="32.8" lengthAdjust="spacingAndGlyphs">OBUF</text>
<text x="1998" y="486.9" font-size="11" text-anchor="start" fill="#161616" stroke="#161616" stroke-width="0.18">I</text>
<text x="2044.8" y="486.9" font-size="11" text-anchor="start" fill="#161616" stroke="#161616" stroke-width="0.18" textLength="7.8" lengthAdjust="spacingAndGlyphs">O</text>
<text x="1962.7" y="487.7" font-size="9" text-anchor="start" fill="#333" stroke="#333" stroke-width="0.18">5</text>
<text x="2150.2" y="487.7" font-size="9" text-anchor="end" fill="#333" stroke="#333" stroke-width="0.18">5</text>
<text x="2018" y="539.9" font-size="12.5" text-anchor="start" fill="#161616" stroke="#161616" stroke-width="0.18" textLength="105" lengthAdjust="spacingAndGlyphs">y_sv_OBUF[6]_inst</text>
<text x="2018.2" y="581.9" font-size="12.5" text-anchor="start" fill="#161616" stroke="#161616" stroke-width="0.18" textLength="32.8" lengthAdjust="spacingAndGlyphs">OBUF</text>
<text x="1998" y="552.9" font-size="11" text-anchor="start" fill="#161616" stroke="#161616" stroke-width="0.18">I</text>
<text x="2044.8" y="552.9" font-size="11" text-anchor="start" fill="#161616" stroke="#161616" stroke-width="0.18" textLength="7.8" lengthAdjust="spacingAndGlyphs">O</text>
<text x="1962.7" y="553.7" font-size="9" text-anchor="start" fill="#333" stroke="#333" stroke-width="0.18">6</text>
<text x="2150.2" y="553.7" font-size="9" text-anchor="end" fill="#333" stroke="#333" stroke-width="0.18">6</text>
<text x="2018" y="604.9" font-size="12.5" text-anchor="start" fill="#161616" stroke="#161616" stroke-width="0.18" textLength="105" lengthAdjust="spacingAndGlyphs">y_sv_OBUF[7]_inst</text>
<text x="2018.2" y="646.9" font-size="12.5" text-anchor="start" fill="#161616" stroke="#161616" stroke-width="0.18" textLength="32.8" lengthAdjust="spacingAndGlyphs">OBUF</text>
<text x="1998" y="617.9" font-size="11" text-anchor="start" fill="#161616" stroke="#161616" stroke-width="0.18">I</text>
<text x="2044.8" y="617.9" font-size="11" text-anchor="start" fill="#161616" stroke="#161616" stroke-width="0.18" textLength="7.8" lengthAdjust="spacingAndGlyphs">O</text>
<text x="1962.7" y="618.7" font-size="9" text-anchor="start" fill="#333" stroke="#333" stroke-width="0.18">7</text>
<text x="2150.2" y="618.7" font-size="9" text-anchor="end" fill="#333" stroke="#333" stroke-width="0.18">7</text>
<text x="2207.4" y="169.3" font-size="12.5" text-anchor="start" fill="#161616" stroke="#161616" stroke-width="0.18" textLength="47.8" lengthAdjust="spacingAndGlyphs">y_sv[7:0]</text>
<text x="2018" y="670.9" font-size="12.5" text-anchor="start" fill="#161616" stroke="#161616" stroke-width="0.18" textLength="99" lengthAdjust="spacingAndGlyphs">y_v_OBUF[0]_inst</text>
<text x="2018.2" y="712.9" font-size="12.5" text-anchor="start" fill="#161616" stroke="#161616" stroke-width="0.18" textLength="32.8" lengthAdjust="spacingAndGlyphs">OBUF</text>
<text x="1998" y="683.9" font-size="11" text-anchor="start" fill="#161616" stroke="#161616" stroke-width="0.18">I</text>
<text x="2044.8" y="683.9" font-size="11" text-anchor="start" fill="#161616" stroke="#161616" stroke-width="0.18" textLength="7.8" lengthAdjust="spacingAndGlyphs">O</text>
<text x="1962.7" y="684.7" font-size="9" text-anchor="start" fill="#333" stroke="#333" stroke-width="0.18">0</text>
<text x="2150.2" y="684.7" font-size="9" text-anchor="end" fill="#333" stroke="#333" stroke-width="0.18">0</text>
<text x="2018" y="735.9" font-size="12.5" text-anchor="start" fill="#161616" stroke="#161616" stroke-width="0.18" textLength="99" lengthAdjust="spacingAndGlyphs">y_v_OBUF[1]_inst</text>
<text x="2018.2" y="777.9" font-size="12.5" text-anchor="start" fill="#161616" stroke="#161616" stroke-width="0.18" textLength="32.8" lengthAdjust="spacingAndGlyphs">OBUF</text>
<text x="1998" y="748.9" font-size="11" text-anchor="start" fill="#161616" stroke="#161616" stroke-width="0.18">I</text>
<text x="2044.8" y="748.9" font-size="11" text-anchor="start" fill="#161616" stroke="#161616" stroke-width="0.18" textLength="7.8" lengthAdjust="spacingAndGlyphs">O</text>
<text x="1962.7" y="749.7" font-size="9" text-anchor="start" fill="#333" stroke="#333" stroke-width="0.18">1</text>
<text x="2150.2" y="749.7" font-size="9" text-anchor="end" fill="#333" stroke="#333" stroke-width="0.18">1</text>
<text x="2018" y="800.9" font-size="12.5" text-anchor="start" fill="#161616" stroke="#161616" stroke-width="0.18" textLength="99" lengthAdjust="spacingAndGlyphs">y_v_OBUF[2]_inst</text>
<text x="2018.2" y="842.9" font-size="12.5" text-anchor="start" fill="#161616" stroke="#161616" stroke-width="0.18" textLength="32.8" lengthAdjust="spacingAndGlyphs">OBUF</text>
<text x="1998" y="813.9" font-size="11" text-anchor="start" fill="#161616" stroke="#161616" stroke-width="0.18">I</text>
<text x="2044.8" y="813.9" font-size="11" text-anchor="start" fill="#161616" stroke="#161616" stroke-width="0.18" textLength="7.8" lengthAdjust="spacingAndGlyphs">O</text>
<text x="1962.7" y="814.7" font-size="9" text-anchor="start" fill="#333" stroke="#333" stroke-width="0.18">2</text>
<text x="2150.2" y="814.7" font-size="9" text-anchor="end" fill="#333" stroke="#333" stroke-width="0.18">2</text>
<text x="2018" y="866.9" font-size="12.5" text-anchor="start" fill="#161616" stroke="#161616" stroke-width="0.18" textLength="99" lengthAdjust="spacingAndGlyphs">y_v_OBUF[3]_inst</text>
<text x="2018.2" y="908.9" font-size="12.5" text-anchor="start" fill="#161616" stroke="#161616" stroke-width="0.18" textLength="32.8" lengthAdjust="spacingAndGlyphs">OBUF</text>
<text x="1998" y="879.9" font-size="11" text-anchor="start" fill="#161616" stroke="#161616" stroke-width="0.18">I</text>
<text x="2044.8" y="879.9" font-size="11" text-anchor="start" fill="#161616" stroke="#161616" stroke-width="0.18" textLength="7.8" lengthAdjust="spacingAndGlyphs">O</text>
<text x="1962.7" y="880.7" font-size="9" text-anchor="start" fill="#333" stroke="#333" stroke-width="0.18">3</text>
<text x="2150.2" y="880.7" font-size="9" text-anchor="end" fill="#333" stroke="#333" stroke-width="0.18">3</text>
<text x="2018" y="931.9" font-size="12.5" text-anchor="start" fill="#161616" stroke="#161616" stroke-width="0.18" textLength="99" lengthAdjust="spacingAndGlyphs">y_v_OBUF[4]_inst</text>
<text x="2018.2" y="973.9" font-size="12.5" text-anchor="start" fill="#161616" stroke="#161616" stroke-width="0.18" textLength="32.8" lengthAdjust="spacingAndGlyphs">OBUF</text>
<text x="1998" y="944.9" font-size="11" text-anchor="start" fill="#161616" stroke="#161616" stroke-width="0.18">I</text>
<text x="2044.8" y="944.9" font-size="11" text-anchor="start" fill="#161616" stroke="#161616" stroke-width="0.18" textLength="7.8" lengthAdjust="spacingAndGlyphs">O</text>
<text x="1962.7" y="945.7" font-size="9" text-anchor="start" fill="#333" stroke="#333" stroke-width="0.18">4</text>
<text x="2150.2" y="945.7" font-size="9" text-anchor="end" fill="#333" stroke="#333" stroke-width="0.18">4</text>
<text x="2018" y="997.9" font-size="12.5" text-anchor="start" fill="#161616" stroke="#161616" stroke-width="0.18" textLength="99" lengthAdjust="spacingAndGlyphs">y_v_OBUF[5]_inst</text>
<text x="2018.2" y="1039.9" font-size="12.5" text-anchor="start" fill="#161616" stroke="#161616" stroke-width="0.18" textLength="32.8" lengthAdjust="spacingAndGlyphs">OBUF</text>
<text x="1998" y="1010.9" font-size="11" text-anchor="start" fill="#161616" stroke="#161616" stroke-width="0.18">I</text>
<text x="2044.8" y="1010.9" font-size="11" text-anchor="start" fill="#161616" stroke="#161616" stroke-width="0.18" textLength="7.8" lengthAdjust="spacingAndGlyphs">O</text>
<text x="1962.7" y="1011.7" font-size="9" text-anchor="start" fill="#333" stroke="#333" stroke-width="0.18">5</text>
<text x="2150.2" y="1011.7" font-size="9" text-anchor="end" fill="#333" stroke="#333" stroke-width="0.18">5</text>
<text x="2018" y="1062.9" font-size="12.5" text-anchor="start" fill="#161616" stroke="#161616" stroke-width="0.18" textLength="99" lengthAdjust="spacingAndGlyphs">y_v_OBUF[6]_inst</text>
<text x="2018.2" y="1104.9" font-size="12.5" text-anchor="start" fill="#161616" stroke="#161616" stroke-width="0.18" textLength="32.8" lengthAdjust="spacingAndGlyphs">OBUF</text>
<text x="1998" y="1075.9" font-size="11" text-anchor="start" fill="#161616" stroke="#161616" stroke-width="0.18">I</text>
<text x="2044.8" y="1075.9" font-size="11" text-anchor="start" fill="#161616" stroke="#161616" stroke-width="0.18" textLength="7.8" lengthAdjust="spacingAndGlyphs">O</text>
<text x="1962.7" y="1076.7" font-size="9" text-anchor="start" fill="#333" stroke="#333" stroke-width="0.18">6</text>
<text x="2150.2" y="1076.7" font-size="9" text-anchor="end" fill="#333" stroke="#333" stroke-width="0.18">6</text>
<text x="2018" y="1127.9" font-size="12.5" text-anchor="start" fill="#161616" stroke="#161616" stroke-width="0.18" textLength="99" lengthAdjust="spacingAndGlyphs">y_v_OBUF[7]_inst</text>
<text x="2018.2" y="1169.9" font-size="12.5" text-anchor="start" fill="#161616" stroke="#161616" stroke-width="0.18" textLength="32.8" lengthAdjust="spacingAndGlyphs">OBUF</text>
<text x="1998" y="1140.9" font-size="11" text-anchor="start" fill="#161616" stroke="#161616" stroke-width="0.18">I</text>
<text x="2044.8" y="1140.9" font-size="11" text-anchor="start" fill="#161616" stroke="#161616" stroke-width="0.18" textLength="7.8" lengthAdjust="spacingAndGlyphs">O</text>
<text x="1962.7" y="1141.7" font-size="9" text-anchor="start" fill="#333" stroke="#333" stroke-width="0.18">7</text>
<text x="2150.2" y="1141.7" font-size="9" text-anchor="end" fill="#333" stroke="#333" stroke-width="0.18">7</text>
<text x="2207.4" y="693.3" font-size="12.5" text-anchor="start" fill="#161616" stroke="#161616" stroke-width="0.18" textLength="42.8" lengthAdjust="spacingAndGlyphs">y_v[7:0]</text>
<text x="2018" y="1193.9" font-size="12.5" text-anchor="start" fill="#161616" stroke="#161616" stroke-width="0.18" textLength="114.1" lengthAdjust="spacingAndGlyphs">y_vhd_OBUF[0]_inst</text>
<text x="2018.2" y="1235.9" font-size="12.5" text-anchor="start" fill="#161616" stroke="#161616" stroke-width="0.18" textLength="32.8" lengthAdjust="spacingAndGlyphs">OBUF</text>
<text x="1998" y="1206.9" font-size="11" text-anchor="start" fill="#161616" stroke="#161616" stroke-width="0.18">I</text>
<text x="2044.8" y="1206.9" font-size="11" text-anchor="start" fill="#161616" stroke="#161616" stroke-width="0.18" textLength="7.8" lengthAdjust="spacingAndGlyphs">O</text>
<text x="1980.7" y="1207.7" font-size="9" text-anchor="start" fill="#333" stroke="#333" stroke-width="0.18">0</text>
<text x="2150.2" y="1207.7" font-size="9" text-anchor="end" fill="#333" stroke="#333" stroke-width="0.18">0</text>
<text x="2018" y="1258.9" font-size="12.5" text-anchor="start" fill="#161616" stroke="#161616" stroke-width="0.18" textLength="114.1" lengthAdjust="spacingAndGlyphs">y_vhd_OBUF[1]_inst</text>
<text x="2018.2" y="1300.9" font-size="12.5" text-anchor="start" fill="#161616" stroke="#161616" stroke-width="0.18" textLength="32.8" lengthAdjust="spacingAndGlyphs">OBUF</text>
<text x="1998" y="1271.9" font-size="11" text-anchor="start" fill="#161616" stroke="#161616" stroke-width="0.18">I</text>
<text x="2044.8" y="1271.9" font-size="11" text-anchor="start" fill="#161616" stroke="#161616" stroke-width="0.18" textLength="7.8" lengthAdjust="spacingAndGlyphs">O</text>
<text x="1980.7" y="1272.7" font-size="9" text-anchor="start" fill="#333" stroke="#333" stroke-width="0.18">1</text>
<text x="2150.2" y="1272.7" font-size="9" text-anchor="end" fill="#333" stroke="#333" stroke-width="0.18">1</text>
<text x="2018" y="1324.9" font-size="12.5" text-anchor="start" fill="#161616" stroke="#161616" stroke-width="0.18" textLength="114.1" lengthAdjust="spacingAndGlyphs">y_vhd_OBUF[2]_inst</text>
<text x="2018.2" y="1366.9" font-size="12.5" text-anchor="start" fill="#161616" stroke="#161616" stroke-width="0.18" textLength="32.8" lengthAdjust="spacingAndGlyphs">OBUF</text>
<text x="1998" y="1337.9" font-size="11" text-anchor="start" fill="#161616" stroke="#161616" stroke-width="0.18">I</text>
<text x="2044.8" y="1337.9" font-size="11" text-anchor="start" fill="#161616" stroke="#161616" stroke-width="0.18" textLength="7.8" lengthAdjust="spacingAndGlyphs">O</text>
<text x="1980.7" y="1338.7" font-size="9" text-anchor="start" fill="#333" stroke="#333" stroke-width="0.18">2</text>
<text x="2150.2" y="1338.7" font-size="9" text-anchor="end" fill="#333" stroke="#333" stroke-width="0.18">2</text>
<text x="2018" y="1389.9" font-size="12.5" text-anchor="start" fill="#161616" stroke="#161616" stroke-width="0.18" textLength="114.1" lengthAdjust="spacingAndGlyphs">y_vhd_OBUF[3]_inst</text>
<text x="2018.2" y="1431.9" font-size="12.5" text-anchor="start" fill="#161616" stroke="#161616" stroke-width="0.18" textLength="32.8" lengthAdjust="spacingAndGlyphs">OBUF</text>
<text x="1998" y="1402.9" font-size="11" text-anchor="start" fill="#161616" stroke="#161616" stroke-width="0.18">I</text>
<text x="2044.8" y="1402.9" font-size="11" text-anchor="start" fill="#161616" stroke="#161616" stroke-width="0.18" textLength="7.8" lengthAdjust="spacingAndGlyphs">O</text>
<text x="1980.7" y="1403.7" font-size="9" text-anchor="start" fill="#333" stroke="#333" stroke-width="0.18">3</text>
<text x="2150.2" y="1403.7" font-size="9" text-anchor="end" fill="#333" stroke="#333" stroke-width="0.18">3</text>
<text x="2018" y="1454.9" font-size="12.5" text-anchor="start" fill="#161616" stroke="#161616" stroke-width="0.18" textLength="114.1" lengthAdjust="spacingAndGlyphs">y_vhd_OBUF[4]_inst</text>
<text x="2018.2" y="1496.9" font-size="12.5" text-anchor="start" fill="#161616" stroke="#161616" stroke-width="0.18" textLength="32.8" lengthAdjust="spacingAndGlyphs">OBUF</text>
<text x="1998" y="1467.9" font-size="11" text-anchor="start" fill="#161616" stroke="#161616" stroke-width="0.18">I</text>
<text x="2044.8" y="1467.9" font-size="11" text-anchor="start" fill="#161616" stroke="#161616" stroke-width="0.18" textLength="7.8" lengthAdjust="spacingAndGlyphs">O</text>
<text x="1980.7" y="1468.7" font-size="9" text-anchor="start" fill="#333" stroke="#333" stroke-width="0.18">4</text>
<text x="2150.2" y="1468.7" font-size="9" text-anchor="end" fill="#333" stroke="#333" stroke-width="0.18">4</text>
<text x="2018" y="1520.9" font-size="12.5" text-anchor="start" fill="#161616" stroke="#161616" stroke-width="0.18" textLength="114.1" lengthAdjust="spacingAndGlyphs">y_vhd_OBUF[5]_inst</text>
<text x="2018.2" y="1562.9" font-size="12.5" text-anchor="start" fill="#161616" stroke="#161616" stroke-width="0.18" textLength="32.8" lengthAdjust="spacingAndGlyphs">OBUF</text>
<text x="1998" y="1533.9" font-size="11" text-anchor="start" fill="#161616" stroke="#161616" stroke-width="0.18">I</text>
<text x="2044.8" y="1533.9" font-size="11" text-anchor="start" fill="#161616" stroke="#161616" stroke-width="0.18" textLength="7.8" lengthAdjust="spacingAndGlyphs">O</text>
<text x="1980.7" y="1534.7" font-size="9" text-anchor="start" fill="#333" stroke="#333" stroke-width="0.18">5</text>
<text x="2150.2" y="1534.7" font-size="9" text-anchor="end" fill="#333" stroke="#333" stroke-width="0.18">5</text>
<text x="2018" y="1585.9" font-size="12.5" text-anchor="start" fill="#161616" stroke="#161616" stroke-width="0.18" textLength="114.1" lengthAdjust="spacingAndGlyphs">y_vhd_OBUF[6]_inst</text>
<text x="2018.2" y="1627.9" font-size="12.5" text-anchor="start" fill="#161616" stroke="#161616" stroke-width="0.18" textLength="32.8" lengthAdjust="spacingAndGlyphs">OBUF</text>
<text x="1998" y="1598.9" font-size="11" text-anchor="start" fill="#161616" stroke="#161616" stroke-width="0.18">I</text>
<text x="2044.8" y="1598.9" font-size="11" text-anchor="start" fill="#161616" stroke="#161616" stroke-width="0.18" textLength="7.8" lengthAdjust="spacingAndGlyphs">O</text>
<text x="1980.7" y="1599.7" font-size="9" text-anchor="start" fill="#333" stroke="#333" stroke-width="0.18">6</text>
<text x="2150.2" y="1599.7" font-size="9" text-anchor="end" fill="#333" stroke="#333" stroke-width="0.18">6</text>
<text x="2018" y="1651.9" font-size="12.5" text-anchor="start" fill="#161616" stroke="#161616" stroke-width="0.18" textLength="114.1" lengthAdjust="spacingAndGlyphs">y_vhd_OBUF[7]_inst</text>
<text x="2018.2" y="1693.9" font-size="12.5" text-anchor="start" fill="#161616" stroke="#161616" stroke-width="0.18" textLength="32.8" lengthAdjust="spacingAndGlyphs">OBUF</text>
<text x="1998" y="1664.9" font-size="11" text-anchor="start" fill="#161616" stroke="#161616" stroke-width="0.18">I</text>
<text x="2044.8" y="1664.9" font-size="11" text-anchor="start" fill="#161616" stroke="#161616" stroke-width="0.18" textLength="7.8" lengthAdjust="spacingAndGlyphs">O</text>
<text x="1980.7" y="1665.7" font-size="9" text-anchor="start" fill="#333" stroke="#333" stroke-width="0.18">7</text>
<text x="2150.2" y="1665.7" font-size="9" text-anchor="end" fill="#333" stroke="#333" stroke-width="0.18">7</text>
<text x="2207.4" y="1216.3" font-size="12.5" text-anchor="start" fill="#161616" stroke="#161616" stroke-width="0.18" textLength="58.2" lengthAdjust="spacingAndGlyphs">y_vhd[7:0]</text>
</g>
</svg>
<svg id="icons" width="3200" height="1720" viewBox="0 0 3200 1720" style="position:absolute;left:0;top:0;pointer-events:none" font-family="Liberation Sans, sans-serif">
<path d="M31 92.4L43 82.8L43 88L56 88L56 96.8L43 96.8L43 102L31 92.4Z" fill="#33508b"/>
<path d="M122.8 92.4L110.8 82.8L110.8 88L98 88L98 96.8L110.8 96.8L110.8 102L122.8 92.4Z" fill="#b9b9b9"/>
<circle cx="175.95" cy="90.8" r="9.45" fill="none" stroke="#33508b" stroke-width="2.9"/>
<path d="M170.4 90.8H181.3M175.85 85.4V96.7" stroke="#33508b" stroke-width="2" fill="none"/>
<rect x="183.35" y="99.05" width="6.4" height="4.6" rx="1.3" transform="rotate(45 186.55 101.35)" fill="#33508b"/>
<circle cx="242.95" cy="90.8" r="9.45" fill="none" stroke="#33508b" stroke-width="2.9"/>
<path d="M237.4 90.8H248.3" stroke="#33508b" stroke-width="2" fill="none"/>
<rect x="250.35" y="99.05" width="6.4" height="4.6" rx="1.3" transform="rotate(45 253.55 101.35)" fill="#33508b"/>
<path d="M299.10 80.05L306.00 80.05L306.00 82.75L301.80 82.75L301.80 86.95L299.10 86.95Z" fill="#33508b"/>
<path d="M300.70 81.65L308.05 89.00" stroke="#33508b" stroke-width="3.3"/>
<path d="M324.00 80.05L317.10 80.05L317.10 82.75L321.30 82.75L321.30 86.95L324.00 86.95Z" fill="#33508b"/>
<path d="M322.40 81.65L315.05 89.00" stroke="#33508b" stroke-width="3.3"/>
<path d="M299.10 104.95L306.00 104.95L306.00 102.25L301.80 102.25L301.80 98.05L299.10 98.05Z" fill="#33508b"/>
<path d="M300.70 103.35L308.05 96.00" stroke="#33508b" stroke-width="3.3"/>
<path d="M324.00 104.95L317.10 104.95L317.10 102.25L321.30 102.25L321.30 98.05L324.00 98.05Z" fill="#33508b"/>
<path d="M322.40 103.35L315.05 96.00" stroke="#33508b" stroke-width="3.3"/>
<path d="M373.1 81.2L367.2 81.2L367.2 87.1M382.9 81.2L389.8 81.2L389.8 87.1M373.1 103.8L367.2 103.8L367.2 96.8M382.9 103.8L389.8 103.8L389.8 96.8" stroke="#33508b" stroke-width="2.3" fill="none"/>
<path d="M372.1 84.6L374.6 99.4L377.4 95.9L380.4 100.5L383.3 98.6L380.6 94.1L384.3 93.3Z" fill="#fff" stroke="#33508b" stroke-width="1.4" stroke-linejoin="miter"/>
<circle cx="445.5" cy="92.25" r="9.9" fill="none" stroke="#33508b" stroke-width="1.8"/>
<path d="M445.5 80V86.9M445.5 97.6V104.8M432.9 92.25H440.3M450.7 92.25H458" stroke="#33508b" stroke-width="2" fill="none"/>
<path d="M500 87.7H525M500 96.1H525" stroke="#3db044" stroke-width="3.3"/>
<rect x="507.05" y="83.05" width="10.65" height="18.8" fill="#fff" stroke="#33508b" stroke-width="1.9"/>
<path d="M567 92.4H592M579.5 79.9V104.9" stroke="#b9b9b9" stroke-width="5" fill="none"/>
<rect x="634" y="89" width="25" height="6.8" fill="#33508b"/>
<path d="M722.45 95.98A10.05 10.05 0 1 1 721.53 86.83" stroke="#33508b" stroke-width="3.7" fill="none"/>
<path d="M725.8 81.8L725.4 90.9L716.3 90.4Z" fill="#33508b"/>
<path d="M3153.90 83.99L3154.91 80.40L3158.09 80.40L3159.10 83.99L3160.68 84.64L3163.93 82.82L3166.18 85.07L3164.36 88.32L3165.01 89.90L3168.60 90.91L3168.60 94.09L3165.01 95.10L3164.36 96.68L3166.18 99.93L3163.93 102.18L3160.68 100.36L3159.10 101.01L3158.09 104.60L3154.91 104.60L3153.90 101.01L3152.32 100.36L3149.07 102.18L3146.82 99.93L3148.64 96.68L3147.99 95.10L3144.40 94.09L3144.40 90.91L3147.99 89.90L3148.64 88.32L3146.82 85.07L3149.07 82.82L3152.32 84.64Z" fill="#33508b" stroke="#33508b" stroke-width="0.8" stroke-linejoin="round"/>
<circle cx="3156.5" cy="92.5" r="4.3" fill="#fff"/>
<text transform="translate(3023.1 44.7) scale(1.13 1)" x="0" y="0" font-size="25" font-weight="bold" text-anchor="middle" fill="#8e8e8e" stroke="#8e8e8e" stroke-width="0.5">?</text>
<rect x="3050" y="40.9" width="18" height="3.7" fill="#8e8e8e"/>
<rect x="3093.4" y="28.2" width="9.6" height="10.4" fill="none" stroke="#8e8e8e" stroke-width="2"/>
<rect x="3087" y="34.8" width="10.6" height="8.8" fill="#e8e8e8" stroke="#8e8e8e" stroke-width="2"/>
<path d="M3124.3 28.2H3138.6V42.8" fill="none" stroke="#8e8e8e" stroke-width="2.3"/>
<path d="M3122 45L3122 36.6L3130.4 45Z" fill="#8e8e8e"/>
<path d="M3125.5 41.5L3132.4 34.6" stroke="#8e8e8e" stroke-width="3.2"/>
<path d="M3159.3 28.3L3174.7 43.7M3174.7 28.3L3159.3 43.7" stroke="#8e8e8e" stroke-width="3"/>
<path d="M3167.2 146.4L3176 137.4L3184.8 146.4" fill="none" stroke="#777" stroke-width="3.6"/>
<path d="M3167.2 1660.4L3176 1669.6L3184.8 1660.4" fill="none" stroke="#777" stroke-width="3.6"/>
<path d="M3167 1684L3178.2 1685.4L3175.4 1688.2L3183 1695.2L3178 1699.8L3170.8 1692.6L3168 1695.4Z" fill="#999"/>
</svg>
</body>
</html>
